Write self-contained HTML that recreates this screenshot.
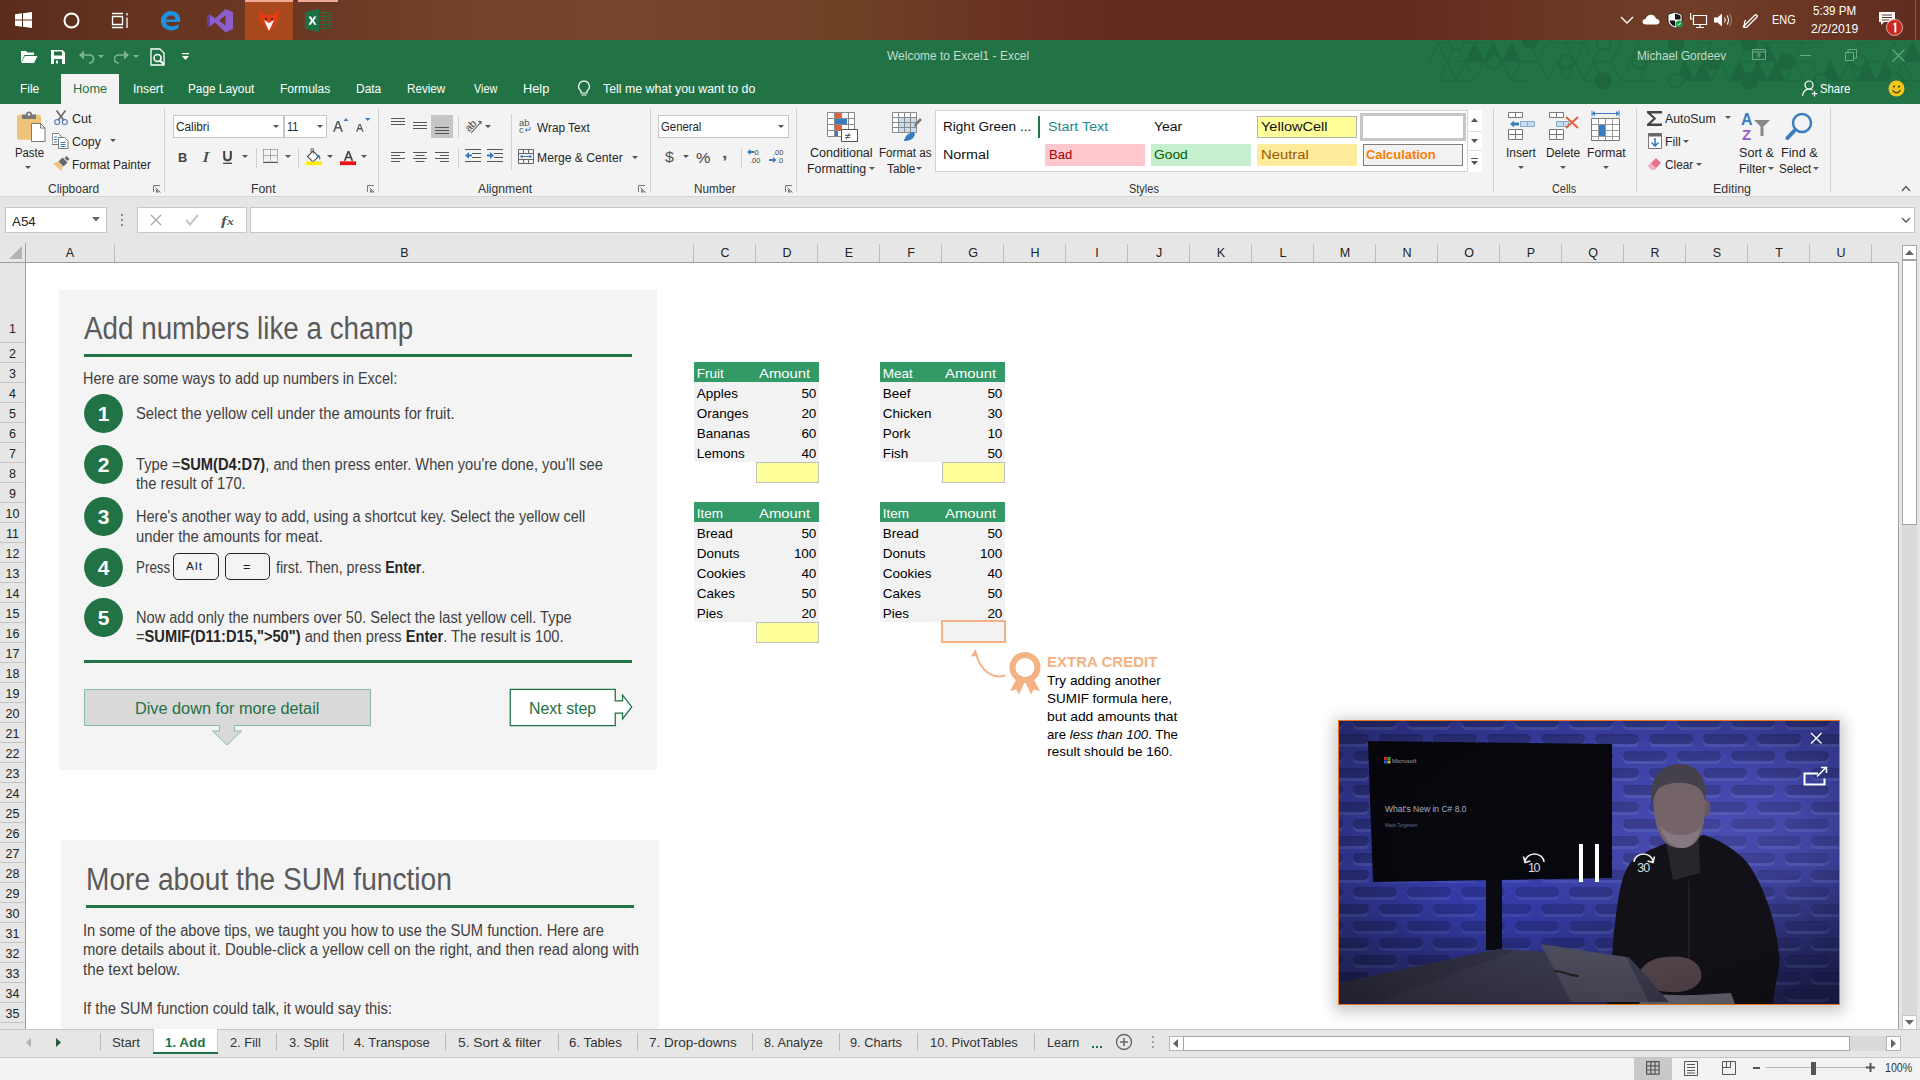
<!DOCTYPE html>
<html><head><meta charset="utf-8"><style>
*{margin:0;padding:0;box-sizing:border-box}
html,body{width:1920px;height:1080px;overflow:hidden;background:#fff;font-family:"Liberation Sans",sans-serif;position:relative}
.a{position:absolute}
.t{position:absolute;white-space:nowrap;line-height:1;transform-origin:0 50%}
</style></head><body>
<div class="a" style="left:0px;top:0px;width:1920px;height:40px;background:linear-gradient(90deg,#5a2c1e 0%,#663420 8%,#6c3a24 18%,#74452a 26%,#76452c 33%,#6e4024 45%,#6a3424 51%,#652a1e 58%,#652a1e 73%,#6c3826 82%,#703e28 88%,#6a3424 95%,#5e2c20 100%)"></div>
<svg class="a" style="left:15px;top:12px;" width="17" height="16" viewBox="0 0 17 16"><path fill="#fff" d="M0 2.3L7 1.3V7.6H0zM8 1.2L17 0V7.6H8zM0 8.4H7V14.7L0 13.7zM8 8.4H17V16L8 14.8z"/></svg>
<svg class="a" style="left:63px;top:12px;" width="17" height="17" viewBox="0 0 17 17"><circle cx="8.5" cy="8.5" r="7" fill="none" stroke="#fff" stroke-width="2"/></svg>
<svg class="a" style="left:111px;top:12px;" width="18" height="17" viewBox="0 0 18 17"><path fill="none" stroke="#fff" stroke-width="1.3" d="M1.5 4.5h10v8h-10zM1 1.5h11M1 15.5h11M16 1v2.5M16 5.5v10.5"/></svg>
<svg class="a" style="left:160px;top:10px;" width="22" height="21" viewBox="0 0 22 21"><path fill="#1e90e0" d="M11 1C5 1 1 5.5 1 11c0 6 5 9.5 10 9.5 3 0 5.5-1 7.5-2.5v-4c-2 1.5-4.5 2.3-7 2.3-3 0-5.5-1.8-5.5-4.3H20c.2-1 .2-1.5.2-2C20.2 4.5 16.5 1 11 1zM6 9.5C6.5 7 8.5 5.5 11 5.5s4.3 1.5 4.5 4z"/></svg>
<svg class="a" style="left:207px;top:8px;" width="26" height="25" viewBox="0 0 26 25"><path fill="#8b5ec9" d="M18.5 1L26 4v17l-7.5 3.5L8 14.5 3 18.5 0 17V8l3-1.5 5 4zM18.5 7.5L12 12.5l6.5 5z"/><path fill="#6b3fa9" d="M0 8l3-1.5v12L0 17z"/></svg>
<div class="a" style="left:245px;top:0px;width:48px;height:40px;background:#a84a1e"></div>
<div class="a" style="left:245px;top:0px;width:48px;height:2px;background:#f0a898"></div>
<svg class="a" style="left:258px;top:9px;" width="22" height="23" viewBox="0 0 22 23"><path fill="#e63a12" d="M1 1l6 5h8l6-5-1 10-9 12-9-12z"/><path fill="#fff" d="M6 11l5 3 5-3-5 11z"/><circle cx="8" cy="10" r="1" fill="#222"/><circle cx="14" cy="10" r="1" fill="#222"/></svg>
<div class="a" style="left:298px;top:0px;width:40px;height:2px;background:#f0a898"></div>
<svg class="a" style="left:305px;top:9px;" width="26" height="23" viewBox="0 0 26 23"><path fill="#1d7044" d="M0 3L14 0V23L0 20z"/><path fill="#fff" d="M3.5 7.5h2.5l1.5 2.8 1.5-2.8h2.4l-2.6 4 2.7 4.2H9.1L7.5 12.8 5.9 15.7H3.4l2.7-4.2z"/><path fill="none" stroke="#1d7044" stroke-width="1.2" d="M14 3.5h11v16H14M14 7.5h11M14 11.5h11M14 15.5h11M19 3.5v16"/></svg>
<svg class="a" style="left:1620px;top:16px;" width="14" height="9" viewBox="0 0 14 9"><path fill="none" stroke="#fff" stroke-width="1.3" d="M1 1l6 6 6-6"/></svg>
<svg class="a" style="left:1642px;top:14px;" width="18" height="11" viewBox="0 0 18 11"><path fill="#fff" d="M4 10.5C1.8 10.5 0.5 9.3 0.5 7.7 0.5 6 2 5 3.6 5.1 4.2 2.5 6.5 0.8 9 0.8c2.8 0 4.6 1.8 5 4 2 0 3.5 1.5 3.5 3 0 1.6-1.3 2.7-3 2.7z"/></svg>
<svg class="a" style="left:1667px;top:12px;" width="16" height="16" viewBox="0 0 16 16"><path fill="#fff" d="M8 0L15 2.5V8c0 4-3 6.8-7 8-4-1.2-7-4-7-8V2.5z"/><path fill="#111" d="M8 1.5L13.5 3.5V7.5H8zM2.5 8.5H8v6C5 13.3 3 11.5 2.5 8.5z"/><path fill="none" stroke="#111" stroke-width="0.8" d="M8 0L15 2.5V8c0 4-3 6.8-7 8-4-1.2-7-4-7-8V2.5z"/><circle cx="12" cy="12" r="3.6" fill="#1f9a48"/><path fill="none" stroke="#fff" stroke-width="1" d="M10.3 12l1.2 1.2 2.2-2.3"/></svg>
<svg class="a" style="left:1690px;top:12px;" width="18" height="16" viewBox="0 0 18 16"><path fill="none" stroke="#fff" stroke-width="1.2" d="M3.5 3.5h13v9h-13zM10 12.5v3M6 15.5h8M0.6 1v6h3"/></svg>
<svg class="a" style="left:1714px;top:13px;" width="18" height="14" viewBox="0 0 18 14"><path fill="#fff" d="M0 4.5h3.5L8 0.5v13L3.5 9.5H0z"/><path fill="none" stroke="#fff" stroke-width="1.1" d="M10.5 4.5c1 1.5 1 3.5 0 5M13 2.5c2 2.5 2 6.5 0 9"/><path fill="none" stroke="#a08070" stroke-width="1.1" d="M15.5 1c2.5 3.5 2.5 8.5 0 12"/></svg>
<svg class="a" style="left:1742px;top:12px;" width="18" height="16" viewBox="0 0 18 16"><path fill="none" stroke="#fff" stroke-width="1.3" d="M3 13l10-10c1-1 3 1 2 2L5 15l-3 1zM1 15c3-3 0-5 3-7"/></svg>
<div class="t" style="transform:scaleX(0.9110);left:1772.40px;top:14.46px;font-size:12px;color:#fff;">ENG</div>
<div class="t" style="transform:scaleX(0.9664);left:1813.40px;top:5.46px;font-size:12px;color:#fff;">5:39 PM</div>
<div class="t" style="transform:scaleX(1.0103);left:1811.40px;top:22.96px;font-size:12px;color:#fff;">2/2/2019</div>
<svg class="a" style="left:1878px;top:11px;" width="18" height="16" viewBox="0 0 18 16"><path fill="#fff" d="M1 1h16v10H6l-3 3v-3H1z"/><path stroke="#6a3424" stroke-width="1" d="M4 4h10M4 6.5h10M4 9h7"/></svg>
<svg class="a" style="left:1885px;top:18px;" width="19" height="19" viewBox="0 0 19 19"><circle cx="9.5" cy="9.5" r="8" fill="#c8281e" stroke="#f0d0c8" stroke-width="0.8"/><path fill="#fff" d="M8.5 5.5l2-1h0.8v10H9.4V6.8l-1 .5z"/></svg>
<div class="a" style="left:1915px;top:0px;width:1px;height:40px;background:#8a5a48"></div>
<div class="a" style="left:0px;top:40px;width:1920px;height:64px;background:#217346"></div>
<svg class="a" style="left:1280px;top:40px;opacity:1" width="640" height="56" viewBox="0 0 640 56"><path d="M158.2 2.7L167.4 21.7" stroke="#1d6a3f" stroke-width="1.2"/><path d="M158.2 2.7L149.1 21.7" stroke="#1d6a3f" stroke-width="1.2"/><path d="M176.5 2.7L185.6 21.7" stroke="#1d6a3f" stroke-width="1.2"/><path d="M176.5 2.7L167.4 21.7" stroke="#1d6a3f" stroke-width="1.2"/><path d="M194.8 2.7L203.9 21.7" stroke="#1d6a3f" stroke-width="1.2"/><path d="M194.8 2.7L185.6 21.7" stroke="#1d6a3f" stroke-width="1.2"/><path d="M194.8 2.7L203.9 21.7L185.6 21.7z" fill="#1e663f"/><path d="M213.0 2.7L222.1 21.7" stroke="#1d6a3f" stroke-width="1.2"/><path d="M213.0 2.7L203.9 21.7" stroke="#1d6a3f" stroke-width="1.2"/><path d="M213.0 2.7L222.1 21.7L203.9 21.7z" fill="#1e663f"/><path d="M231.2 2.7L240.4 21.7" stroke="#1d6a3f" stroke-width="1.2"/><path d="M231.2 2.7L240.4 21.7L222.1 21.7z" fill="#1e663f"/><path d="M249.5 2.7L258.6 21.7" stroke="#1d6a3f" stroke-width="1.2"/><path d="M267.8 2.7L258.6 21.7" stroke="#1d6a3f" stroke-width="1.2"/><path d="M286.0 2.7L295.1 21.7" stroke="#1d6a3f" stroke-width="1.2"/><path d="M304.2 2.7L313.4 21.7" stroke="#1d6a3f" stroke-width="1.2"/><path d="M304.2 2.7L295.1 21.7" stroke="#1d6a3f" stroke-width="1.2"/><path d="M322.5 2.7L313.4 21.7" stroke="#1d6a3f" stroke-width="1.2"/><path d="M340.8 2.7L331.6 21.7" stroke="#1d6a3f" stroke-width="1.2"/><path d="M359.0 2.7L368.1 21.7" stroke="#1d6a3f" stroke-width="1.2"/><path d="M359.0 2.7L349.9 21.7" stroke="#1d6a3f" stroke-width="1.2"/><path d="M377.2 2.7L368.1 21.7" stroke="#1d6a3f" stroke-width="1.2"/><path d="M395.5 2.7L386.4 21.7" stroke="#1d6a3f" stroke-width="1.2"/><path d="M432.0 2.7L422.9 21.7" stroke="#1d6a3f" stroke-width="1.2"/><path d="M450.2 2.7L441.1 21.7" stroke="#1d6a3f" stroke-width="1.2"/><path d="M468.5 2.7L477.6 21.7" stroke="#1d6a3f" stroke-width="1.2"/><path d="M468.5 2.7L459.4 21.7" stroke="#1d6a3f" stroke-width="1.2"/><path d="M486.8 2.7L495.9 21.7" stroke="#1d6a3f" stroke-width="1.2"/><path d="M486.8 2.7L477.6 21.7" stroke="#1d6a3f" stroke-width="1.2"/><path d="M486.8 2.7L495.9 21.7L477.6 21.7z" fill="#1e663f"/><path d="M523.2 2.7L514.1 21.7" stroke="#1d6a3f" stroke-width="1.2"/><path d="M578.0 2.7L568.9 21.7" stroke="#1d6a3f" stroke-width="1.2"/><path d="M614.5 2.7L623.6 21.7" stroke="#1d6a3f" stroke-width="1.2"/><path d="M614.5 2.7L605.4 21.7" stroke="#1d6a3f" stroke-width="1.2"/><path d="M632.8 2.7L641.9 21.7" stroke="#1d6a3f" stroke-width="1.2"/><path d="M632.8 2.7L623.6 21.7" stroke="#1d6a3f" stroke-width="1.2"/><path d="M632.8 2.7L641.9 21.7L623.6 21.7z" fill="#1e663f"/><path d="M167.4 21.7L176.5 40.7" stroke="#1d6a3f" stroke-width="1.2"/><path d="M167.4 21.7L158.2 40.7" stroke="#1d6a3f" stroke-width="1.2"/><path d="M185.6 21.7L194.8 40.7" stroke="#1d6a3f" stroke-width="1.2"/><path d="M185.6 21.7L176.5 40.7" stroke="#1d6a3f" stroke-width="1.2"/><path d="M203.9 21.7L194.8 40.7" stroke="#1d6a3f" stroke-width="1.2"/><path d="M222.1 21.7L231.2 40.7" stroke="#1d6a3f" stroke-width="1.2"/><path d="M240.4 21.7L231.2 40.7" stroke="#1d6a3f" stroke-width="1.2"/><path d="M258.6 21.7L267.8 40.7" stroke="#1d6a3f" stroke-width="1.2"/><path d="M276.9 21.7L286.0 40.7" stroke="#1d6a3f" stroke-width="1.2"/><path d="M276.9 21.7L267.8 40.7" stroke="#1d6a3f" stroke-width="1.2"/><path d="M295.1 21.7L304.2 40.7" stroke="#1d6a3f" stroke-width="1.2"/><path d="M295.1 21.7L286.0 40.7" stroke="#1d6a3f" stroke-width="1.2"/><path d="M313.4 21.7L322.5 40.7" stroke="#1d6a3f" stroke-width="1.2"/><path d="M313.4 21.7L304.2 40.7" stroke="#1d6a3f" stroke-width="1.2"/><path d="M331.6 21.7L340.8 40.7" stroke="#1d6a3f" stroke-width="1.2"/><path d="M349.9 21.7L340.8 40.7" stroke="#1d6a3f" stroke-width="1.2"/><path d="M368.1 21.7L359.0 40.7" stroke="#1d6a3f" stroke-width="1.2"/><path d="M404.6 21.7L413.8 40.7" stroke="#1d6a3f" stroke-width="1.2"/><path d="M404.6 21.7L395.5 40.7" stroke="#1d6a3f" stroke-width="1.2"/><path d="M404.6 21.7L413.8 40.7L395.5 40.7z" fill="#1e663f"/><path d="M422.9 21.7L413.8 40.7" stroke="#1d6a3f" stroke-width="1.2"/><path d="M422.9 21.7L432.0 40.7L413.8 40.7z" fill="#1e663f"/><path d="M441.1 21.7L450.2 40.7" stroke="#1d6a3f" stroke-width="1.2"/><path d="M441.1 21.7L432.0 40.7" stroke="#1d6a3f" stroke-width="1.2"/><path d="M459.4 21.7L468.5 40.7" stroke="#1d6a3f" stroke-width="1.2"/><path d="M459.4 21.7L450.2 40.7" stroke="#1d6a3f" stroke-width="1.2"/><path d="M459.4 21.7L468.5 40.7L450.2 40.7z" fill="#1e663f"/><path d="M477.6 21.7L486.8 40.7" stroke="#1d6a3f" stroke-width="1.2"/><path d="M477.6 21.7L468.5 40.7" stroke="#1d6a3f" stroke-width="1.2"/><path d="M477.6 21.7L486.8 40.7L468.5 40.7z" fill="#1e663f"/><path d="M495.9 21.7L505.0 40.7L486.8 40.7z" fill="#1e663f"/><path d="M514.1 21.7L523.2 40.7" stroke="#1d6a3f" stroke-width="1.2"/><path d="M514.1 21.7L505.0 40.7" stroke="#1d6a3f" stroke-width="1.2"/><path d="M532.4 21.7L541.5 40.7" stroke="#1d6a3f" stroke-width="1.2"/><path d="M550.6 21.7L559.8 40.7" stroke="#1d6a3f" stroke-width="1.2"/><path d="M550.6 21.7L541.5 40.7" stroke="#1d6a3f" stroke-width="1.2"/><path d="M550.6 21.7L559.8 40.7L541.5 40.7z" fill="#1e663f"/><path d="M568.9 21.7L578.0 40.7" stroke="#1d6a3f" stroke-width="1.2"/><path d="M568.9 21.7L559.8 40.7" stroke="#1d6a3f" stroke-width="1.2"/><path d="M587.1 21.7L578.0 40.7" stroke="#1d6a3f" stroke-width="1.2"/><path d="M587.1 21.7L596.2 40.7L578.0 40.7z" fill="#1e663f"/><path d="M605.4 21.7L596.2 40.7" stroke="#1d6a3f" stroke-width="1.2"/><path d="M605.4 21.7L614.5 40.7L596.2 40.7z" fill="#1e663f"/><path d="M623.6 21.7L632.8 40.7" stroke="#1d6a3f" stroke-width="1.2"/><path d="M623.6 21.7L614.5 40.7" stroke="#1d6a3f" stroke-width="1.2"/><path d="M158.2 2.7H176.5" stroke="#1d6a3f" stroke-width="1.2"/><path d="M176.5 2.7H194.8" stroke="#1d6a3f" stroke-width="1.2"/><path d="M194.8 2.7H213.0" stroke="#1d6a3f" stroke-width="1.2"/><path d="M267.8 2.7H286.0" stroke="#1d6a3f" stroke-width="1.2"/><path d="M286.0 2.7H304.2" stroke="#1d6a3f" stroke-width="1.2"/><path d="M413.8 2.7H432.0" stroke="#1d6a3f" stroke-width="1.2"/><path d="M450.2 2.7H468.5" stroke="#1d6a3f" stroke-width="1.2"/><path d="M468.5 2.7H486.8" stroke="#1d6a3f" stroke-width="1.2"/><path d="M486.8 2.7H505.0" stroke="#1d6a3f" stroke-width="1.2"/><path d="M505.0 2.7H523.2" stroke="#1d6a3f" stroke-width="1.2"/><path d="M523.2 2.7H541.5" stroke="#1d6a3f" stroke-width="1.2"/><path d="M578.0 2.7H596.2" stroke="#1d6a3f" stroke-width="1.2"/><path d="M167.4 21.7H185.6" stroke="#1d6a3f" stroke-width="1.2"/><path d="M185.6 21.7H203.9" stroke="#1d6a3f" stroke-width="1.2"/><path d="M203.9 21.7H222.1" stroke="#1d6a3f" stroke-width="1.2"/><path d="M222.1 21.7H240.4" stroke="#1d6a3f" stroke-width="1.2"/><path d="M240.4 21.7H258.6" stroke="#1d6a3f" stroke-width="1.2"/><path d="M313.4 21.7H331.6" stroke="#1d6a3f" stroke-width="1.2"/><path d="M368.1 21.7H386.4" stroke="#1d6a3f" stroke-width="1.2"/><path d="M459.4 21.7H477.6" stroke="#1d6a3f" stroke-width="1.2"/><path d="M477.6 21.7H495.9" stroke="#1d6a3f" stroke-width="1.2"/><path d="M514.1 21.7H532.4" stroke="#1d6a3f" stroke-width="1.2"/><path d="M568.9 21.7H587.1" stroke="#1d6a3f" stroke-width="1.2"/><path d="M587.1 21.7H605.4" stroke="#1d6a3f" stroke-width="1.2"/><path d="M641.9 21.7H660.1" stroke="#1d6a3f" stroke-width="1.2"/><path d="M158.2 40.7H176.5" stroke="#1d6a3f" stroke-width="1.2"/><path d="M176.5 40.7H194.8" stroke="#1d6a3f" stroke-width="1.2"/><path d="M231.2 40.7H249.5" stroke="#1d6a3f" stroke-width="1.2"/><path d="M304.2 40.7H322.5" stroke="#1d6a3f" stroke-width="1.2"/><path d="M340.8 40.7H359.0" stroke="#1d6a3f" stroke-width="1.2"/><path d="M359.0 40.7H377.2" stroke="#1d6a3f" stroke-width="1.2"/><path d="M450.2 40.7H468.5" stroke="#1d6a3f" stroke-width="1.2"/><path d="M505.0 40.7H523.2" stroke="#1d6a3f" stroke-width="1.2"/><path d="M523.2 40.7H541.5" stroke="#1d6a3f" stroke-width="1.2"/><path d="M541.5 40.7H559.8" stroke="#1d6a3f" stroke-width="1.2"/><path d="M559.8 40.7H578.0" stroke="#1d6a3f" stroke-width="1.2"/><path d="M596.2 40.7H614.5" stroke="#1d6a3f" stroke-width="1.2"/><path d="M614.5 40.7H632.8" stroke="#1d6a3f" stroke-width="1.2"/><path d="M632.8 40.7H651.0" stroke="#1d6a3f" stroke-width="1.2"/><circle cx="176.5999999999999" cy="2.700000000000003" r="7" fill="#217346" stroke="#1d6a3f" stroke-width="2.2"/><circle cx="250.4000000000001" cy="0" r="8.5" fill="#1d663e"/><circle cx="323.5999999999999" cy="2.700000000000003" r="7" fill="#217346" stroke="#1d6a3f" stroke-width="2.2"/><circle cx="213.79999999999995" cy="21.700000000000003" r="7" fill="#217346" stroke="#1d6a3f" stroke-width="2.2"/><circle cx="286.29999999999995" cy="21.700000000000003" r="7" fill="#217346" stroke="#1d6a3f" stroke-width="2.2"/><circle cx="359.5" cy="21.700000000000003" r="7" fill="#217346" stroke="#1d6a3f" stroke-width="2.2"/><circle cx="323" cy="40.7" r="8.5" fill="#1d663e"/><circle cx="396" cy="40.7" r="7" fill="#217346" stroke="#1d6a3f" stroke-width="2.2"/><circle cx="469.4000000000001" cy="40.7" r="8.5" fill="#1d663e"/><circle cx="541" cy="40.7" r="7" fill="#217346" stroke="#1d6a3f" stroke-width="2.2"/><circle cx="615.8" cy="40.7" r="7" fill="#217346" stroke="#1d6a3f" stroke-width="2.2"/><circle cx="432.79999999999995" cy="21.700000000000003" r="8.5" fill="#1d663e"/><circle cx="506" cy="21.700000000000003" r="8.5" fill="#1d663e"/><circle cx="579" cy="21.700000000000003" r="7" fill="#217346" stroke="#1d6a3f" stroke-width="2.2"/><circle cx="396" cy="2.700000000000003" r="8.5" fill="#1d663e"/><circle cx="469" cy="2.700000000000003" r="8.5" fill="#1d663e"/></svg>
<svg class="a" style="left:20px;top:49px;" width="18" height="15" viewBox="0 0 18 15"><path fill="#fff" d="M1 2h5l1.5 1.5H14V6H4.5L1 13.5zM4.8 7H17.5L14 14H1.3z"/></svg>
<svg class="a" style="left:51px;top:50px;" width="14" height="14" viewBox="0 0 14 14"><path fill="#fff" d="M0 0h11.5L14 2.5V14H0zM3 1.5v4h8v-4zM3 9v5h8V9zM5 10.5h2v3H5z"/></svg>
<svg class="a" style="left:79px;top:50px;" width="27" height="14" viewBox="0 0 27 14"><path fill="none" stroke="#7fb597" stroke-width="1.6" d="M2 5h8c3 0 4.5 2 4.5 4s-1.5 4-4.5 4"/><path fill="#7fb597" d="M0 5l5-4.5v9zM19 5h6l-3 3z"/></svg>
<svg class="a" style="left:114px;top:50px;" width="27" height="14" viewBox="0 0 27 14"><path fill="none" stroke="#7fb597" stroke-width="1.6" d="M13 5H5C2 5 .5 7 .5 9s1.5 4 4.5 4"/><path fill="#7fb597" d="M15 5L10 .5v9zM19 5h6l-3 3z"/></svg>
<svg class="a" style="left:150px;top:48px;" width="16" height="18" viewBox="0 0 16 18"><path fill="none" stroke="#fff" stroke-width="1.3" d="M1 1h9l4 4v12H1z"/><circle cx="7.5" cy="10" r="3.5" fill="none" stroke="#fff" stroke-width="1.6"/><path stroke="#fff" stroke-width="2" d="M10 12.5l4 4"/></svg>
<svg class="a" style="left:182px;top:53px;" width="7" height="8" viewBox="0 0 7 8"><path fill="#fff" d="M0 0h7v1.2H0zM0 3h7L3.5 7z"/></svg>
<div class="t" style="transform:scaleX(0.9979);left:887.40px;top:50.46px;font-size:12px;color:#c4dccd;">Welcome to Excel1  -  Excel</div>
<div class="t" style="transform:scaleX(0.9833);left:1636.90px;top:50.46px;font-size:12px;color:#c4dccd;">Michael Gordeev</div>
<svg class="a" style="left:1752px;top:49px;" width="15" height="12" viewBox="0 0 15 12"><path fill="none" stroke="#6fa887" stroke-width="1" d="M.5 .5h13v10H.5zM.5 3h13M7 9V4.5M5 6.5l2-2 2 2"/></svg>
<div class="a" style="left:1800px;top:55px;width:11px;height:1px;background:#6fa887"></div>
<svg class="a" style="left:1845px;top:49px;" width="12" height="12" viewBox="0 0 12 12"><path fill="none" stroke="#6fa887" stroke-width="1" d="M.5 3.5h8v8h-8zM3 3.5V.5h8.5v8.5H8.5"/></svg>
<svg class="a" style="left:1892px;top:49px;" width="13" height="13" viewBox="0 0 13 13"><path fill="none" stroke="#6fa887" stroke-width="1.1" d="M.5 .5l12 12M12.5 .5l-12 12"/></svg>
<div class="a" style="left:61px;top:74px;width:58px;height:30px;background:#f3f3f3"></div>
<div class="t" style="transform:scaleX(0.9550);left:19.68px;top:83.35px;font-size:12.5px;color:#fff;">File</div>
<div class="t" style="transform:scaleX(1.0272);left:72.78px;top:83.35px;font-size:12.5px;color:#217346;">Home</div>
<div class="t" style="transform:scaleX(0.9675);left:132.68px;top:83.35px;font-size:12.5px;color:#fff;">Insert</div>
<div class="t" style="transform:scaleX(0.9437);left:188.38px;top:83.35px;font-size:12.5px;color:#fff;">Page Layout</div>
<div class="t" style="transform:scaleX(0.9646);left:280.38px;top:83.35px;font-size:12.5px;color:#fff;">Formulas</div>
<div class="t" style="transform:scaleX(0.9562);left:356.38px;top:83.35px;font-size:12.5px;color:#fff;">Data</div>
<div class="t" style="transform:scaleX(0.9329);left:407.38px;top:83.35px;font-size:12.5px;color:#fff;">Review</div>
<div class="t" style="transform:scaleX(0.8651);left:474.38px;top:83.35px;font-size:12.5px;color:#fff;">View</div>
<div class="t" style="transform:scaleX(1.0207);left:523.38px;top:83.35px;font-size:12.5px;color:#fff;">Help</div>
<svg class="a" style="left:577px;top:80px;" width="14" height="17" viewBox="0 0 14 17"><path fill="none" stroke="#fff" stroke-width="1.2" d="M7 1.2a5.3 5.3 0 0 0-3 9.7V13h6v-2.1a5.3 5.3 0 0 0-3-9.7zM4.5 15h5"/></svg>
<div class="t" style="transform:scaleX(0.9870);left:603.38px;top:83.35px;font-size:12.5px;color:#fff;">Tell me what you want to do</div>
<svg class="a" style="left:1802px;top:80px;" width="16" height="17" viewBox="0 0 16 17"><circle cx="7" cy="5" r="4" fill="none" stroke="#fff" stroke-width="1.2"/><path fill="none" stroke="#fff" stroke-width="1.2" d="M.6 16c0-4 3-7 6.4-7 1.5 0 2.5.4 3.5 1M12.5 11v5.5M9.8 13.7h5.5"/></svg>
<div class="t" style="transform:scaleX(0.9068);left:1820.38px;top:83.35px;font-size:12.5px;color:#fff;">Share</div>
<svg class="a" style="left:1888px;top:80px;" width="17" height="17" viewBox="0 0 17 17"><circle cx="8.5" cy="8.5" r="8" fill="#f5c518"/><circle cx="6" cy="6.5" r="1.1" fill="#3a3a00"/><circle cx="11" cy="6.5" r="1.1" fill="#3a3a00"/><path fill="none" stroke="#3a3a00" stroke-width="1.1" d="M4.5 10c1 2 2.3 2.8 4 2.8s3-.8 4-2.8"/></svg>
<div class="a" style="left:0px;top:104px;width:1920px;height:92px;background:#f3f3f3"></div>
<div class="a" style="left:0px;top:196px;width:1920px;height:1px;background:#d6d6d6"></div>
<svg class="a" style="left:16px;top:111px;" width="30" height="32" viewBox="0 0 30 32"><rect x="1" y="3.8" width="24" height="25" rx="2" fill="#eec47c"/><path fill="#777" d="M6 3.5h14v4.5H6z"/><circle cx="13" cy="3.5" r="3" fill="#777"/><circle cx="13" cy="3.5" r="1.2" fill="#f3f3f3"/><path fill="#fff" stroke="#7a7a7a" stroke-width="1" d="M15.5 12.5h9l4.5 4.5v13.5H15.5z"/><path fill="none" stroke="#7a7a7a" d="M24.5 12.5v4.5h4.5"/></svg>
<div class="t" style="transform:scaleX(0.9450);left:14.80px;top:147.16px;font-size:12px;color:#262626;">Paste</div>
<svg class="a" style="left:25px;top:166px;" width="6" height="4" viewBox="0 0 6 4"><path fill="#555" d="M0 0h6L3 3z"/></svg>
<svg class="a" style="left:53px;top:110px;" width="16" height="16" viewBox="0 0 16 16"><path stroke="#666" stroke-width="1.6" d="M3.5 0.5l7.5 10M12.5 0.5L5 10.5"/><circle cx="4.2" cy="12" r="2.5" fill="none" stroke="#4a7cc2" stroke-width="1.1"/><circle cx="11.8" cy="12" r="2.5" fill="none" stroke="#4a7cc2" stroke-width="1.1"/></svg>
<div class="t" style="transform:scaleX(1.0488);left:71.70px;top:112.96px;font-size:12px;color:#262626;">Cut</div>
<svg class="a" style="left:52px;top:133px;" width="17" height="16" viewBox="0 0 17 16"><path fill="#fff" stroke="#777" d="M.5 .5h6l2.5 2.5v8.5h-9z"/><path fill="#fff" stroke="#777" d="M6.5 4.5h6l3.5 3.5v7.5h-9.5z"/><path stroke="#3a7cc0" d="M2 4h3M2 6.5h3M2 9h3M8.5 9.5h5M8.5 11.5h5M8.5 13.5h5"/></svg>
<div class="t" style="transform:scaleX(1.0316);left:71.70px;top:136.36px;font-size:12px;color:#262626;">Copy</div>
<svg class="a" style="left:109.5px;top:139px;" width="6" height="4" viewBox="0 0 6 4"><path fill="#555" d="M0 0h6L3 3z"/></svg>
<svg class="a" style="left:53px;top:156px;" width="17" height="15" viewBox="0 0 17 15"><path fill="#eec47c" d="M0 7.5l5-2 5 5-2 4.5z"/><path fill="#666" d="M5.5 5.5l4-4 5 5-4 4z"/><path fill="#666" d="M11.5 2l2-2 3 3-2 2z"/></svg>
<div class="t" style="transform:scaleX(0.9942);left:71.70px;top:158.96px;font-size:12px;color:#262626;">Format Painter</div>
<div class="t" style="transform:scaleX(0.9966);left:47.90px;top:182.96px;font-size:12px;color:#333;">Clipboard</div>
<svg class="a" style="left:153px;top:185px;" width="8" height="8" viewBox="0 0 8 8"><path fill="none" stroke="#777" stroke-width="1" d="M.5 7V.5H7"/><path fill="#777" d="M3 4l3.5 3.5H3zM3.5 3L7.5 7"/><path stroke="#777" d="M2.5 2.5l5 5"/></svg>
<div class="a" style="left:164px;top:108px;width:1px;height:84px;background:#d2d2d2"></div>
<div class="a" style="left:173px;top:115px;width:111px;height:23px;background:#fff;border:1px solid #c6c6c6"></div>
<div class="t" style="transform:scaleX(0.9819);left:176.20px;top:121.46px;font-size:12px;color:#262626;">Calibri</div>
<svg class="a" style="left:273px;top:124.5px;" width="6" height="4" viewBox="0 0 6 4"><path fill="#555" d="M0 0h6L3 3z"/></svg>
<div class="a" style="left:284px;top:115px;width:43px;height:23px;background:#fff;border:1px solid #c6c6c6"></div>
<div class="t" style="transform:scaleX(0.8982);left:286.90px;top:121.46px;font-size:12px;color:#262626;">11</div>
<svg class="a" style="left:317px;top:124.5px;" width="6" height="4" viewBox="0 0 6 4"><path fill="#555" d="M0 0h6L3 3z"/></svg>
<svg class="a" style="left:333px;top:118px;" width="15" height="14" viewBox="0 0 15 14"><path fill="#555" d="M0 13.7L4 3h2l4 10.7H8.2L7.1 10.6H2.9L1.8 13.7zM3.4 9.1h3.2L5 4.6z"/><path fill="#3a7cc0" d="M10.5 3l2.5-3L15.5 3z"/></svg>
<svg class="a" style="left:355px;top:118px;" width="15" height="14" viewBox="0 0 15 14"><path fill="#555" d="M1 13.7L4 6h1.6L8.6 13.7H7.2L6.4 11.4H3.2L2.4 13.7zM3.7 10.1h2.2L4.8 7z"/><path fill="#3a7cc0" d="M10 0h5.5l-2.75 3z"/></svg>
<div class="t" style="transform:scaleX(1.0242);left:178.38px;top:151.55px;font-size:12.5px;color:#444;font-weight:bold;">B</div>
<div class="t" style="transform:scaleX(1.5839);left:201.80px;top:150.92px;font-size:14px;color:#444;font-family:'Liberation Serif';font-style:italic">I</div>
<svg class="a" style="left:222px;top:151px;" width="11" height="13" viewBox="0 0 11 13"><path fill="none" stroke="#444" stroke-width="2.1" d="M2.2 0v5.8c0 2.3 1.2 3.6 3.3 3.6s3.3-1.3 3.3-3.6V0"/><path stroke="#444" stroke-width="1.3" d="M1 12.3h9"/></svg>
<svg class="a" style="left:241.5px;top:155px;" width="6" height="4" viewBox="0 0 6 4"><path fill="#555" d="M0 0h6L3 3z"/></svg>
<div class="a" style="left:256px;top:148px;width:1px;height:20px;background:#d2d2d2"></div>
<svg class="a" style="left:263px;top:149px;" width="15" height="15" viewBox="0 0 15 15"><path fill="none" stroke="#666" stroke-width="1" stroke-dasharray="1 1" d="M.5 .5h14M.5 .5v12M14.5 .5v12M7.5 .5v12M.5 6.5h14"/><path stroke="#555" stroke-width="1.2" d="M0 13.4h15"/></svg>
<svg class="a" style="left:284.5px;top:155px;" width="6" height="4" viewBox="0 0 6 4"><path fill="#555" d="M0 0h6L3 3z"/></svg>
<div class="a" style="left:298px;top:148px;width:1px;height:20px;background:#d2d2d2"></div>
<svg class="a" style="left:305px;top:148px;" width="18" height="18" viewBox="0 0 18 18"><path fill="#fff" stroke="#555" stroke-width="1.1" d="M2.5 8.5l5.5-5.5 5.5 5.5-5.5 5.5z"/><path fill="none" stroke="#555" stroke-width="1" d="M6 4.5V1.5a1.2 1.2 0 0 1 2.4 0v4"/><path fill="#3a7cc0" d="M13.5 6.5c2 1.5 2.5 3.5 1.3 5.5-.5-1.5-1-2.5-2.5-3.5z"/><path fill="#ffee00" d="M1 13.5h16v3.6H1z"/></svg>
<svg class="a" style="left:327px;top:155px;" width="6" height="4" viewBox="0 0 6 4"><path fill="#555" d="M0 0h6L3 3z"/></svg>
<svg class="a" style="left:340px;top:150px;" width="17" height="16" viewBox="0 0 17 16"><path fill="#444" d="M3.8 10.8L7.6 1h1.8l3.8 9.8h-1.9l-.9-2.5H6.6l-.9 2.5zM7.2 6.8h2.6L8.5 3z"/><path fill="#ee1111" d="M0 11.3h16v3.8H0z"/></svg>
<svg class="a" style="left:361px;top:155px;" width="6" height="4" viewBox="0 0 6 4"><path fill="#555" d="M0 0h6L3 3z"/></svg>
<div class="t" style="transform:scaleX(1.0243);left:250.90px;top:182.96px;font-size:12px;color:#333;">Font</div>
<svg class="a" style="left:367px;top:185px;" width="8" height="8" viewBox="0 0 8 8"><path fill="none" stroke="#777" stroke-width="1" d="M.5 7V.5H7"/><path fill="#777" d="M3 4l3.5 3.5H3zM3.5 3L7.5 7"/><path stroke="#777" d="M2.5 2.5l5 5"/></svg>
<div class="a" style="left:378px;top:108px;width:1px;height:84px;background:#d2d2d2"></div>
<svg class="a" style="left:391px;top:118px;" width="15" height="8" viewBox="0 0 15 8"><path stroke="#555" stroke-width="1" d="M0 .5h14M0 3.5h14M0 6.5h14"/></svg>
<svg class="a" style="left:413px;top:122px;" width="15" height="8" viewBox="0 0 15 8"><path stroke="#555" stroke-width="1" d="M0 .5h14M0 3.5h14M0 6.5h14"/></svg>
<div class="a" style="left:431px;top:115px;width:22px;height:23px;background:#c5c5c5"></div>
<svg class="a" style="left:435px;top:127px;" width="15" height="8" viewBox="0 0 15 8"><path stroke="#555" stroke-width="1" d="M0 .5h14M0 3.5h14M0 6.5h14"/></svg>
<div class="a" style="left:457.6px;top:116px;width:1px;height:22px;background:#d2d2d2"></div>
<svg class="a" style="left:465px;top:118px;" width="17" height="16" viewBox="0 0 17 16"><text x="0" y="11" font-size="10.5" fill="#444" font-family="Liberation Sans" transform="rotate(-45 6 8)">ab</text><path stroke="#555" stroke-width="1.1" d="M6 15L16 4"/><path fill="#555" d="M13 3h3.5v3.5z"/></svg>
<svg class="a" style="left:485px;top:124.5px;" width="6" height="4" viewBox="0 0 6 4"><path fill="#555" d="M0 0h6L3 3z"/></svg>
<svg class="a" style="left:391px;top:152px;" width="15" height="10" viewBox="0 0 15 10"><path stroke="#555" d="M0 .5h14M0 3.5h9M0 6.5h14M0 9.5h9"/></svg>
<svg class="a" style="left:413px;top:152px;" width="15" height="10" viewBox="0 0 15 10"><path stroke="#555" d="M0 .5h14M2.5 3.5h9M0 6.5h14M2.5 9.5h9"/></svg>
<svg class="a" style="left:435px;top:152px;" width="15" height="10" viewBox="0 0 15 10"><path stroke="#555" d="M0 .5h14M5 3.5h9M0 6.5h14M5 9.5h9"/></svg>
<div class="a" style="left:457.6px;top:148px;width:1px;height:20px;background:#d2d2d2"></div>
<svg class="a" style="left:465px;top:149px;" width="17" height="14" viewBox="0 0 17 14"><path stroke="#555" d="M0 .5h16M7 4.5h9M7 8.5h9M0 12.5h16"/><path fill="#3a7cc0" d="M0 6.5l4-3.5v2.5h3v2H4v2.5z"/></svg>
<svg class="a" style="left:487px;top:149px;" width="17" height="14" viewBox="0 0 17 14"><path stroke="#555" d="M0 .5h16M7 4.5h9M7 8.5h9M0 12.5h16"/><path fill="#3a7cc0" d="M7 6.5l-4-3.5v2.5H0v2h3v2.5z"/></svg>
<div class="a" style="left:510.7px;top:114px;width:1px;height:56px;background:#d2d2d2"></div>
<svg class="a" style="left:519px;top:118px;" width="14" height="15" viewBox="0 0 14 15"><text x="0" y="7.5" font-size="9.5" fill="#555" font-family="Liberation Sans">ab</text><text x="0" y="14.5" font-size="9.5" fill="#555" font-family="Liberation Sans">c</text><path fill="none" stroke="#3a7cc0" stroke-width="1" d="M11 9v3H7"/><path fill="#3a7cc0" d="M8 10l-2 2 2 2z"/></svg>
<div class="t" style="transform:scaleX(0.9855);left:536.80px;top:121.66px;font-size:12px;color:#262626;">Wrap Text</div>
<svg class="a" style="left:518px;top:149px;" width="16" height="16" viewBox="0 0 16 16"><path fill="none" stroke="#666" d="M.5 .5h15v14H.5zM.5 4.5h15M.5 10.5h15M5.5 .5v4M10.5 .5v4M5.5 10.5v4M10.5 10.5v4"/><path stroke="#3a7cc0" d="M3 7.5h10"/><path fill="#3a7cc0" d="M2 7.5l2.5-2v4zM14 7.5l-2.5-2v4z"/></svg>
<div class="t" style="transform:scaleX(1.0129);left:536.80px;top:152.46px;font-size:12px;color:#262626;">Merge &amp; Center</div>
<svg class="a" style="left:631.5px;top:155.5px;" width="6" height="4" viewBox="0 0 6 4"><path fill="#555" d="M0 0h6L3 3z"/></svg>
<div class="t" style="transform:scaleX(1.0155);left:478.40px;top:182.96px;font-size:12px;color:#333;">Alignment</div>
<svg class="a" style="left:638px;top:185px;" width="8" height="8" viewBox="0 0 8 8"><path fill="none" stroke="#777" stroke-width="1" d="M.5 7V.5H7"/><path fill="#777" d="M3 4l3.5 3.5H3zM3.5 3L7.5 7"/><path stroke="#777" d="M2.5 2.5l5 5"/></svg>
<div class="a" style="left:649.7px;top:108px;width:1px;height:84px;background:#d2d2d2"></div>
<div class="a" style="left:658px;top:115px;width:131px;height:23px;background:#fff;border:1px solid #c6c6c6"></div>
<div class="t" style="transform:scaleX(0.9461);left:661.00px;top:121.46px;font-size:12px;color:#262626;">General</div>
<svg class="a" style="left:778px;top:124.5px;" width="6" height="4" viewBox="0 0 6 4"><path fill="#555" d="M0 0h6L3 3z"/></svg>
<div class="t" style="transform:scaleX(1.1415);left:664.50px;top:150.12px;font-size:14px;color:#555;">$</div>
<svg class="a" style="left:683px;top:155px;" width="6" height="4" viewBox="0 0 6 4"><path fill="#555" d="M0 0h6L3 3z"/></svg>
<div class="t" style="transform:scaleX(1.1563);left:696.10px;top:151.12px;font-size:14px;color:#444;">%</div>
<div class="t" style="transform:scaleX(1.3880);left:721.90px;top:145.62px;font-size:14px;color:#555;font-weight:bold;">,</div>
<div class="a" style="left:740.8px;top:148px;width:1px;height:20px;background:#d2d2d2"></div>
<svg class="a" style="left:747px;top:148px;" width="16" height="16" viewBox="0 0 16 16"><path fill="#3a7cc0" d="M0 4l3.5-3v2h4v2h-4v2z"/><text x="7.5" y="7" font-size="7.5" fill="#444" font-family="Liberation Sans">0</text><text x="3" y="15" font-size="7.5" fill="#444" font-family="Liberation Sans">.00</text></svg>
<svg class="a" style="left:769px;top:148px;" width="16" height="16" viewBox="0 0 16 16"><text x="4" y="7" font-size="7.5" fill="#444" font-family="Liberation Sans">.00</text><path fill="#3a7cc0" d="M7.5 12l-3.5-3v2h-4v2h4v2z"/><text x="8" y="15" font-size="7.5" fill="#444" font-family="Liberation Sans">.0</text></svg>
<div class="t" style="transform:scaleX(0.9769);left:693.90px;top:182.96px;font-size:12px;color:#333;">Number</div>
<svg class="a" style="left:785px;top:185px;" width="8" height="8" viewBox="0 0 8 8"><path fill="none" stroke="#777" stroke-width="1" d="M.5 7V.5H7"/><path fill="#777" d="M3 4l3.5 3.5H3zM3.5 3L7.5 7"/><path stroke="#777" d="M2.5 2.5l5 5"/></svg>
<div class="a" style="left:796px;top:108px;width:1px;height:84px;background:#d2d2d2"></div>
<svg class="a" style="left:827px;top:112px;" width="31" height="30" viewBox="0 0 31 30"><path fill="#fff" stroke="#8a8a8a" stroke-width="1" d="M.5 .5h27v24H.5z"/><path stroke="#8a8a8a" d="M.5 6.5h27M.5 12.5h27M.5 18.5h27M7.5 .5v24M14.5 .5v24M21.5 .5v24"/><path fill="#e0613a" d="M8 1h6v5H8zM8 13h6v5H8z"/><path fill="#3a7cc0" d="M8 7h12v5H8zM8 19h3v5H8z"/><path fill="#fff" stroke="#555" d="M14.5 17.5h16v12h-16z"/><text x="17.5" y="28" font-size="11" fill="#444" font-family="Liberation Sans">≠</text></svg>
<div class="t" style="transform:scaleX(1.0425);left:809.90px;top:147.26px;font-size:12px;color:#262626;">Conditional</div>
<div class="t" style="transform:scaleX(1.0321);left:806.90px;top:163.16px;font-size:12px;color:#262626;">Formatting</div>
<svg class="a" style="left:868.5px;top:167px;" width="6" height="4" viewBox="0 0 6 4"><path fill="#555" d="M0 0h6L3 3z"/></svg>
<svg class="a" style="left:892px;top:112px;" width="30" height="30" viewBox="0 0 30 30"><path fill="#fff" stroke="#8a8a8a" d="M.5 .5h24v20H.5z"/><path fill="#c8dcf0" d="M6 5h18v15H6z"/><path stroke="#8a8a8a" d="M.5 5.5h24M.5 10.5h24M.5 15.5h24M6.5 .5v20M12.5 .5v20M18.5 .5v20"/><path fill="#777" d="M22 13l6-7 2 2-7 7z"/><path fill="#3a7cc0" d="M12 29c1-5 4-8 9-9l2 2c-1 5-5 7-11 7z"/></svg>
<div class="t" style="transform:scaleX(0.9719);left:878.80px;top:147.26px;font-size:12px;color:#262626;">Format as</div>
<div class="t" style="transform:scaleX(0.9935);left:887.10px;top:163.16px;font-size:12px;color:#262626;">Table</div>
<svg class="a" style="left:916px;top:167px;" width="6" height="4" viewBox="0 0 6 4"><path fill="#555" d="M0 0h6L3 3z"/></svg>
<div class="a" style="left:935px;top:110px;width:547px;height:62px;background:#fff;border:1px solid #d4d4d4"></div>
<div class="t" style="transform:scaleX(1.0855);left:942.58px;top:121.05px;font-size:12.5px;color:#111;">Right Green ...</div>
<div class="a" style="left:1038px;top:116px;width:2px;height:22px;background:#217346"></div>
<div class="t" style="transform:scaleX(1.1459);left:1048.38px;top:121.05px;font-size:12.5px;color:#1d8a8a;">Start Text</div>
<div class="t" style="transform:scaleX(1.1181);left:1154.38px;top:121.05px;font-size:12.5px;color:#111;">Year</div>
<div class="a" style="left:1257px;top:116px;width:100px;height:22px;background:#ffff99;border:1px solid #b2b2b2"></div>
<div class="t" style="transform:scaleX(1.1631);left:1260.58px;top:121.05px;font-size:12.5px;color:#111;">YellowCell</div>
<div class="a" style="left:1360px;top:113px;width:106px;height:28px;background:#fff;border:3px solid #c6c6c6"></div>
<div class="t" style="transform:scaleX(1.1477);left:942.58px;top:148.75px;font-size:12.5px;color:#111;">Normal</div>
<div class="a" style="left:1045px;top:144px;width:100px;height:22px;background:#ffc7ce"></div>
<div class="t" style="transform:scaleX(1.0449);left:1048.88px;top:148.75px;font-size:12.5px;color:#9c0006;">Bad</div>
<div class="a" style="left:1151px;top:144px;width:100px;height:22px;background:#c6efce"></div>
<div class="t" style="transform:scaleX(1.1032);left:1154.38px;top:148.75px;font-size:12.5px;color:#006100;">Good</div>
<div class="a" style="left:1257px;top:144px;width:100px;height:22px;background:#ffeb9c"></div>
<div class="t" style="transform:scaleX(1.1850);left:1260.58px;top:148.75px;font-size:12.5px;color:#9c5700;">Neutral</div>
<div class="a" style="left:1363px;top:144px;width:100px;height:22px;background:#f2f2f2;border:1px solid #7f7f7f"></div>
<div class="t" style="transform:scaleX(1.0338);left:1366.38px;top:148.75px;font-size:12.5px;color:#fa7d00;font-weight:bold;">Calculation</div>
<div class="a" style="left:1467px;top:110px;width:15px;height:62px;background:#fff;border-left:1px solid #d4d4d4"></div>
<div class="a" style="left:1467px;top:131px;width:15px;height:1px;background:#e0e0e0"></div>
<div class="a" style="left:1467px;top:150px;width:15px;height:1px;background:#e0e0e0"></div>
<svg class="a" style="left:1471px;top:118px;" width="7" height="5" viewBox="0 0 7 5"><path fill="#555" d="M0 4L3.5 0 7 4z"/></svg>
<svg class="a" style="left:1471px;top:139px;" width="7" height="5" viewBox="0 0 7 5"><path fill="#555" d="M0 0h7L3.5 4z"/></svg>
<svg class="a" style="left:1471px;top:158px;" width="7" height="8" viewBox="0 0 7 8"><path fill="#555" d="M0 0h7v1H0zM0 3h7L3.5 7z"/></svg>
<div class="t" style="transform:scaleX(0.9147);left:1129.40px;top:182.96px;font-size:12px;color:#333;">Styles</div>
<div class="a" style="left:1492.5px;top:108px;width:1px;height:84px;background:#d2d2d2"></div>
<svg class="a" style="left:1508px;top:112px;" width="28" height="28" viewBox="0 0 28 28"><path fill="#fff" stroke="#777" d="M.5 .5h7v5h-7zM7.5 .5h7v5h-7zM.5 17.5h7v5h-7zM7.5 17.5h7v5h-7zM.5 22.5h7v5h-7zM7.5 22.5h7v5h-7z"/><path fill="#c8dcf0" stroke="#8aa8c8" d="M12.5 9.5h7v5h-7zM19.5 9.5h7v5h-7z"/><path fill="#3a7cc0" d="M2 12l4-3.5v2h5v3H6v2z"/></svg>
<div class="t" style="transform:scaleX(0.9961);left:1506.40px;top:147.26px;font-size:12px;color:#262626;">Insert</div>
<svg class="a" style="left:1518px;top:166px;" width="6" height="4" viewBox="0 0 6 4"><path fill="#555" d="M0 0h6L3 3z"/></svg>
<svg class="a" style="left:1549px;top:112px;" width="31" height="28" viewBox="0 0 31 28"><path fill="#fff" stroke="#777" d="M.5 .5h7v5h-7zM7.5 .5h7v5h-7zM.5 17.5h7v5h-7zM7.5 17.5h7v5h-7zM.5 22.5h7v5h-7zM7.5 22.5h7v5h-7z"/><path fill="#c8dcf0" stroke="#8aa8c8" d="M7.5 9.5h7v5h-7zM14.5 9.5h5v5h-5z"/><path stroke="#e0613a" stroke-width="2" d="M17 5l12 11M29 5L17 16"/></svg>
<div class="t" style="transform:scaleX(0.9859);left:1546.40px;top:147.26px;font-size:12px;color:#262626;">Delete</div>
<svg class="a" style="left:1560px;top:166px;" width="6" height="4" viewBox="0 0 6 4"><path fill="#555" d="M0 0h6L3 3z"/></svg>
<svg class="a" style="left:1590px;top:110px;" width="31" height="32" viewBox="0 0 31 32"><path stroke="#3a7cc0" d="M2 3.5h27M2 .5v6M29 .5v6"/><path fill="#3a7cc0" d="M2 3.5l3-2.5v5zM29 3.5l-3-2.5v5z"/><path fill="#fff" stroke="#777" d="M1.5 8.5h28v22h-28z"/><path stroke="#999" d="M1.5 14.5h28M1.5 20.5h28M1.5 26.5h28M8.5 8.5v22M15.5 8.5v22M22.5 8.5v22"/><path fill="#3a7cc0" d="M9 15h6v11H9z"/></svg>
<div class="t" style="transform:scaleX(1.0180);left:1586.90px;top:147.26px;font-size:12px;color:#262626;">Format</div>
<svg class="a" style="left:1603px;top:166px;" width="6" height="4" viewBox="0 0 6 4"><path fill="#555" d="M0 0h6L3 3z"/></svg>
<div class="t" style="transform:scaleX(0.9073);left:1551.90px;top:182.96px;font-size:12px;color:#333;">Cells</div>
<div class="a" style="left:1635.5px;top:108px;width:1px;height:84px;background:#d2d2d2"></div>
<svg class="a" style="left:1647px;top:111px;" width="16" height="15" viewBox="0 0 16 15"><path fill="#444" d="M0 0h15v2.5H3.8l5.5 5-5.5 5H15V15H0v-2l6.3-5.5L0 2z"/></svg>
<div class="t" style="transform:scaleX(1.0272);left:1665.40px;top:112.96px;font-size:12px;color:#262626;">AutoSum</div>
<svg class="a" style="left:1725px;top:116px;" width="6" height="4" viewBox="0 0 6 4"><path fill="#555" d="M0 0h6L3 3z"/></svg>
<svg class="a" style="left:1648px;top:133px;" width="15" height="16" viewBox="0 0 15 16"><path fill="#fff" stroke="#777" d="M.5 .5h13v15h-13z"/><path fill="#666" d="M.5 .5h13v3h-13z"/><path fill="none" stroke="#3a7cc0" stroke-width="1.6" d="M7 5v8M3.5 9.5L7 13l3.5-3.5"/></svg>
<div class="t" style="transform:scaleX(1.0243);left:1665.40px;top:136.26px;font-size:12px;color:#262626;">Fill</div>
<svg class="a" style="left:1683px;top:140px;" width="6" height="4" viewBox="0 0 6 4"><path fill="#555" d="M0 0h6L3 3z"/></svg>
<svg class="a" style="left:1648px;top:156px;" width="14" height="14" viewBox="0 0 14 14"><path fill="#e8708a" d="M0 10l8-8 5 5-8 8z"/><path fill="#f4b0c0" d="M0 10l3-3 5 5-3 3z"/></svg>
<div class="t" style="transform:scaleX(0.9830);left:1665.40px;top:159.26px;font-size:12px;color:#262626;">Clear</div>
<svg class="a" style="left:1695.5px;top:163px;" width="6" height="4" viewBox="0 0 6 4"><path fill="#555" d="M0 0h6L3 3z"/></svg>
<svg class="a" style="left:1741px;top:112px;" width="31" height="28" viewBox="0 0 31 28"><text x="0" y="13" font-size="16" font-weight="bold" fill="#3a7cc0" font-family="Liberation Sans">A</text><text x="1" y="27.5" font-size="15" font-weight="bold" fill="#9b59c6" font-family="Liberation Sans">Z</text><path fill="#888" d="M13 8h16l-6.5 6.5v9.5h-3v-9.5z"/></svg>
<div class="t" style="transform:scaleX(1.0477);left:1739.40px;top:147.26px;font-size:12px;color:#262626;">Sort &amp;</div>
<div class="t" style="transform:scaleX(1.0198);left:1739.40px;top:163.16px;font-size:12px;color:#262626;">Filter</div>
<svg class="a" style="left:1768px;top:167px;" width="6" height="4" viewBox="0 0 6 4"><path fill="#555" d="M0 0h6L3 3z"/></svg>
<svg class="a" style="left:1785px;top:112px;" width="29" height="28" viewBox="0 0 29 28"><circle cx="17" cy="11" r="9" fill="none" stroke="#3a7cc0" stroke-width="2.5"/><path stroke="#3a7cc0" stroke-width="4" stroke-linecap="round" d="M10 18l-7.5 8"/></svg>
<div class="t" style="transform:scaleX(1.0580);left:1781.40px;top:147.26px;font-size:12px;color:#262626;">Find &amp;</div>
<div class="t" style="transform:scaleX(0.9652);left:1779.40px;top:163.16px;font-size:12px;color:#262626;">Select</div>
<svg class="a" style="left:1813px;top:167px;" width="6" height="4" viewBox="0 0 6 4"><path fill="#555" d="M0 0h6L3 3z"/></svg>
<div class="t" style="transform:scaleX(1.0340);left:1713.40px;top:182.96px;font-size:12px;color:#333;">Editing</div>
<div class="a" style="left:1829.5px;top:108px;width:1px;height:84px;background:#d2d2d2"></div>
<svg class="a" style="left:1901px;top:185px;" width="10" height="7" viewBox="0 0 10 7"><path fill="none" stroke="#555" stroke-width="1.3" d="M1 6l4-4.5L9 6"/></svg>
<div class="a" style="left:0px;top:197px;width:1920px;height:46px;background:#e6e6e6"></div>
<div class="a" style="left:5px;top:207px;width:102px;height:26px;background:#fff;border:1px solid #c6c6c6"></div>
<div class="t" style="transform:scaleX(1.0285);left:11.85px;top:214.64px;font-size:13px;color:#262626;">A54</div>
<svg class="a" style="left:92px;top:217px;" width="8" height="5" viewBox="0 0 8 5"><path fill="#666" d="M0 0h8L4 4.5z"/></svg>
<div class="a" style="left:121px;top:214px;width:2px;height:2px;background:#8a8a8a"></div>
<div class="a" style="left:121px;top:219px;width:2px;height:2px;background:#8a8a8a"></div>
<div class="a" style="left:121px;top:224px;width:2px;height:2px;background:#8a8a8a"></div>
<div class="a" style="left:137px;top:207px;width:110px;height:26px;background:#fff;border:1px solid #c6c6c6"></div>
<svg class="a" style="left:150px;top:214px;" width="12" height="12" viewBox="0 0 12 12"><path stroke="#a6a6a6" stroke-width="1.3" d="M1 1l10 10M11 1L1 11"/></svg>
<svg class="a" style="left:185px;top:214px;" width="14" height="12" viewBox="0 0 14 12"><path fill="none" stroke="#c6c6c6" stroke-width="2" d="M1 6l4 4.5L13 1"/></svg>
<div class="t" style="transform:scaleX(1.3699);left:221.35px;top:213.54px;font-size:13px;color:#555;"><i style="font-family:'Liberation Serif';font-weight:bold">f</i><i style="font-family:'Liberation Serif';font-size:10px;font-weight:bold">x</i></div>
<div class="a" style="left:250px;top:207px;width:1665px;height:26px;background:#fff;border:1px solid #c6c6c6"></div>
<svg class="a" style="left:1901px;top:217px;" width="10" height="6" viewBox="0 0 10 6"><path fill="none" stroke="#555" stroke-width="1.3" d="M1 1l4 4 4-4"/></svg>
<div class="a" style="left:0px;top:243px;width:1899px;height:20px;background:#e6e6e6"></div>
<div class="a" style="left:0px;top:262px;width:1899px;height:1px;background:#9e9e9e"></div>
<svg class="a" style="left:9px;top:246px;" width="13" height="13" viewBox="0 0 13 13"><path fill="#b4b4b4" d="M13 0v13H0z"/></svg>
<div class="a" style="left:25px;top:243px;width:1px;height:786px;background:#9e9e9e"></div>
<div class="a" style="left:114px;top:244px;width:1px;height:18px;background:#bdbdbd"></div>
<div class="t" style="left:25px;top:245px;width:90px;text-align:center;font-size:12.5px;line-height:16px;color:#222">A</div>
<div class="a" style="left:693px;top:244px;width:1px;height:18px;background:#bdbdbd"></div>
<div class="t" style="left:115px;top:245px;width:579px;text-align:center;font-size:12.5px;line-height:16px;color:#222">B</div>
<div class="a" style="left:755px;top:244px;width:1px;height:18px;background:#bdbdbd"></div>
<div class="t" style="left:694px;top:245px;width:62px;text-align:center;font-size:12.5px;line-height:16px;color:#222">C</div>
<div class="a" style="left:817px;top:244px;width:1px;height:18px;background:#bdbdbd"></div>
<div class="t" style="left:756px;top:245px;width:62px;text-align:center;font-size:12.5px;line-height:16px;color:#222">D</div>
<div class="a" style="left:879px;top:244px;width:1px;height:18px;background:#bdbdbd"></div>
<div class="t" style="left:818px;top:245px;width:62px;text-align:center;font-size:12.5px;line-height:16px;color:#222">E</div>
<div class="a" style="left:941px;top:244px;width:1px;height:18px;background:#bdbdbd"></div>
<div class="t" style="left:880px;top:245px;width:62px;text-align:center;font-size:12.5px;line-height:16px;color:#222">F</div>
<div class="a" style="left:1003px;top:244px;width:1px;height:18px;background:#bdbdbd"></div>
<div class="t" style="left:942px;top:245px;width:62px;text-align:center;font-size:12.5px;line-height:16px;color:#222">G</div>
<div class="a" style="left:1065px;top:244px;width:1px;height:18px;background:#bdbdbd"></div>
<div class="t" style="left:1004px;top:245px;width:62px;text-align:center;font-size:12.5px;line-height:16px;color:#222">H</div>
<div class="a" style="left:1127px;top:244px;width:1px;height:18px;background:#bdbdbd"></div>
<div class="t" style="left:1066px;top:245px;width:62px;text-align:center;font-size:12.5px;line-height:16px;color:#222">I</div>
<div class="a" style="left:1189px;top:244px;width:1px;height:18px;background:#bdbdbd"></div>
<div class="t" style="left:1128px;top:245px;width:62px;text-align:center;font-size:12.5px;line-height:16px;color:#222">J</div>
<div class="a" style="left:1251px;top:244px;width:1px;height:18px;background:#bdbdbd"></div>
<div class="t" style="left:1190px;top:245px;width:62px;text-align:center;font-size:12.5px;line-height:16px;color:#222">K</div>
<div class="a" style="left:1313px;top:244px;width:1px;height:18px;background:#bdbdbd"></div>
<div class="t" style="left:1252px;top:245px;width:62px;text-align:center;font-size:12.5px;line-height:16px;color:#222">L</div>
<div class="a" style="left:1375px;top:244px;width:1px;height:18px;background:#bdbdbd"></div>
<div class="t" style="left:1314px;top:245px;width:62px;text-align:center;font-size:12.5px;line-height:16px;color:#222">M</div>
<div class="a" style="left:1437px;top:244px;width:1px;height:18px;background:#bdbdbd"></div>
<div class="t" style="left:1376px;top:245px;width:62px;text-align:center;font-size:12.5px;line-height:16px;color:#222">N</div>
<div class="a" style="left:1499px;top:244px;width:1px;height:18px;background:#bdbdbd"></div>
<div class="t" style="left:1438px;top:245px;width:62px;text-align:center;font-size:12.5px;line-height:16px;color:#222">O</div>
<div class="a" style="left:1561px;top:244px;width:1px;height:18px;background:#bdbdbd"></div>
<div class="t" style="left:1500px;top:245px;width:62px;text-align:center;font-size:12.5px;line-height:16px;color:#222">P</div>
<div class="a" style="left:1623px;top:244px;width:1px;height:18px;background:#bdbdbd"></div>
<div class="t" style="left:1562px;top:245px;width:62px;text-align:center;font-size:12.5px;line-height:16px;color:#222">Q</div>
<div class="a" style="left:1685px;top:244px;width:1px;height:18px;background:#bdbdbd"></div>
<div class="t" style="left:1624px;top:245px;width:62px;text-align:center;font-size:12.5px;line-height:16px;color:#222">R</div>
<div class="a" style="left:1747px;top:244px;width:1px;height:18px;background:#bdbdbd"></div>
<div class="t" style="left:1686px;top:245px;width:62px;text-align:center;font-size:12.5px;line-height:16px;color:#222">S</div>
<div class="a" style="left:1809px;top:244px;width:1px;height:18px;background:#bdbdbd"></div>
<div class="t" style="left:1748px;top:245px;width:62px;text-align:center;font-size:12.5px;line-height:16px;color:#222">T</div>
<div class="a" style="left:1871px;top:244px;width:1px;height:18px;background:#bdbdbd"></div>
<div class="t" style="left:1810px;top:245px;width:62px;text-align:center;font-size:12.5px;line-height:16px;color:#222">U</div>
<div class="a" style="left:0px;top:263px;width:25px;height:766px;background:#e6e6e6"></div>
<div class="a" style="left:0px;top:342px;width:25px;height:1px;background:#c4c4c4"></div>
<div class="t" style="left:0;top:321px;width:25px;text-align:center;font-size:12.5px;line-height:16px;color:#222">1</div>
<div class="a" style="left:0px;top:362px;width:25px;height:1px;background:#c4c4c4"></div>
<div class="t" style="left:0;top:346px;width:25px;text-align:center;font-size:12.5px;line-height:16px;color:#222">2</div>
<div class="a" style="left:0px;top:382px;width:25px;height:1px;background:#c4c4c4"></div>
<div class="t" style="left:0;top:366px;width:25px;text-align:center;font-size:12.5px;line-height:16px;color:#222">3</div>
<div class="a" style="left:0px;top:402px;width:25px;height:1px;background:#c4c4c4"></div>
<div class="t" style="left:0;top:386px;width:25px;text-align:center;font-size:12.5px;line-height:16px;color:#222">4</div>
<div class="a" style="left:0px;top:422px;width:25px;height:1px;background:#c4c4c4"></div>
<div class="t" style="left:0;top:406px;width:25px;text-align:center;font-size:12.5px;line-height:16px;color:#222">5</div>
<div class="a" style="left:0px;top:442px;width:25px;height:1px;background:#c4c4c4"></div>
<div class="t" style="left:0;top:426px;width:25px;text-align:center;font-size:12.5px;line-height:16px;color:#222">6</div>
<div class="a" style="left:0px;top:462px;width:25px;height:1px;background:#c4c4c4"></div>
<div class="t" style="left:0;top:446px;width:25px;text-align:center;font-size:12.5px;line-height:16px;color:#222">7</div>
<div class="a" style="left:0px;top:482px;width:25px;height:1px;background:#c4c4c4"></div>
<div class="t" style="left:0;top:466px;width:25px;text-align:center;font-size:12.5px;line-height:16px;color:#222">8</div>
<div class="a" style="left:0px;top:502px;width:25px;height:1px;background:#c4c4c4"></div>
<div class="t" style="left:0;top:486px;width:25px;text-align:center;font-size:12.5px;line-height:16px;color:#222">9</div>
<div class="a" style="left:0px;top:522px;width:25px;height:1px;background:#c4c4c4"></div>
<div class="t" style="left:0;top:506px;width:25px;text-align:center;font-size:12.5px;line-height:16px;color:#222">10</div>
<div class="a" style="left:0px;top:542px;width:25px;height:1px;background:#c4c4c4"></div>
<div class="t" style="left:0;top:526px;width:25px;text-align:center;font-size:12.5px;line-height:16px;color:#222">11</div>
<div class="a" style="left:0px;top:562px;width:25px;height:1px;background:#c4c4c4"></div>
<div class="t" style="left:0;top:546px;width:25px;text-align:center;font-size:12.5px;line-height:16px;color:#222">12</div>
<div class="a" style="left:0px;top:582px;width:25px;height:1px;background:#c4c4c4"></div>
<div class="t" style="left:0;top:566px;width:25px;text-align:center;font-size:12.5px;line-height:16px;color:#222">13</div>
<div class="a" style="left:0px;top:602px;width:25px;height:1px;background:#c4c4c4"></div>
<div class="t" style="left:0;top:586px;width:25px;text-align:center;font-size:12.5px;line-height:16px;color:#222">14</div>
<div class="a" style="left:0px;top:622px;width:25px;height:1px;background:#c4c4c4"></div>
<div class="t" style="left:0;top:606px;width:25px;text-align:center;font-size:12.5px;line-height:16px;color:#222">15</div>
<div class="a" style="left:0px;top:642px;width:25px;height:1px;background:#c4c4c4"></div>
<div class="t" style="left:0;top:626px;width:25px;text-align:center;font-size:12.5px;line-height:16px;color:#222">16</div>
<div class="a" style="left:0px;top:662px;width:25px;height:1px;background:#c4c4c4"></div>
<div class="t" style="left:0;top:646px;width:25px;text-align:center;font-size:12.5px;line-height:16px;color:#222">17</div>
<div class="a" style="left:0px;top:682px;width:25px;height:1px;background:#c4c4c4"></div>
<div class="t" style="left:0;top:666px;width:25px;text-align:center;font-size:12.5px;line-height:16px;color:#222">18</div>
<div class="a" style="left:0px;top:702px;width:25px;height:1px;background:#c4c4c4"></div>
<div class="t" style="left:0;top:686px;width:25px;text-align:center;font-size:12.5px;line-height:16px;color:#222">19</div>
<div class="a" style="left:0px;top:722px;width:25px;height:1px;background:#c4c4c4"></div>
<div class="t" style="left:0;top:706px;width:25px;text-align:center;font-size:12.5px;line-height:16px;color:#222">20</div>
<div class="a" style="left:0px;top:742px;width:25px;height:1px;background:#c4c4c4"></div>
<div class="t" style="left:0;top:726px;width:25px;text-align:center;font-size:12.5px;line-height:16px;color:#222">21</div>
<div class="a" style="left:0px;top:762px;width:25px;height:1px;background:#c4c4c4"></div>
<div class="t" style="left:0;top:746px;width:25px;text-align:center;font-size:12.5px;line-height:16px;color:#222">22</div>
<div class="a" style="left:0px;top:782px;width:25px;height:1px;background:#c4c4c4"></div>
<div class="t" style="left:0;top:766px;width:25px;text-align:center;font-size:12.5px;line-height:16px;color:#222">23</div>
<div class="a" style="left:0px;top:802px;width:25px;height:1px;background:#c4c4c4"></div>
<div class="t" style="left:0;top:786px;width:25px;text-align:center;font-size:12.5px;line-height:16px;color:#222">24</div>
<div class="a" style="left:0px;top:822px;width:25px;height:1px;background:#c4c4c4"></div>
<div class="t" style="left:0;top:806px;width:25px;text-align:center;font-size:12.5px;line-height:16px;color:#222">25</div>
<div class="a" style="left:0px;top:842px;width:25px;height:1px;background:#c4c4c4"></div>
<div class="t" style="left:0;top:826px;width:25px;text-align:center;font-size:12.5px;line-height:16px;color:#222">26</div>
<div class="a" style="left:0px;top:862px;width:25px;height:1px;background:#c4c4c4"></div>
<div class="t" style="left:0;top:846px;width:25px;text-align:center;font-size:12.5px;line-height:16px;color:#222">27</div>
<div class="a" style="left:0px;top:882px;width:25px;height:1px;background:#c4c4c4"></div>
<div class="t" style="left:0;top:866px;width:25px;text-align:center;font-size:12.5px;line-height:16px;color:#222">28</div>
<div class="a" style="left:0px;top:902px;width:25px;height:1px;background:#c4c4c4"></div>
<div class="t" style="left:0;top:886px;width:25px;text-align:center;font-size:12.5px;line-height:16px;color:#222">29</div>
<div class="a" style="left:0px;top:922px;width:25px;height:1px;background:#c4c4c4"></div>
<div class="t" style="left:0;top:906px;width:25px;text-align:center;font-size:12.5px;line-height:16px;color:#222">30</div>
<div class="a" style="left:0px;top:942px;width:25px;height:1px;background:#c4c4c4"></div>
<div class="t" style="left:0;top:926px;width:25px;text-align:center;font-size:12.5px;line-height:16px;color:#222">31</div>
<div class="a" style="left:0px;top:962px;width:25px;height:1px;background:#c4c4c4"></div>
<div class="t" style="left:0;top:946px;width:25px;text-align:center;font-size:12.5px;line-height:16px;color:#222">32</div>
<div class="a" style="left:0px;top:982px;width:25px;height:1px;background:#c4c4c4"></div>
<div class="t" style="left:0;top:966px;width:25px;text-align:center;font-size:12.5px;line-height:16px;color:#222">33</div>
<div class="a" style="left:0px;top:1002px;width:25px;height:1px;background:#c4c4c4"></div>
<div class="t" style="left:0;top:986px;width:25px;text-align:center;font-size:12.5px;line-height:16px;color:#222">34</div>
<div class="a" style="left:0px;top:1022px;width:25px;height:1px;background:#c4c4c4"></div>
<div class="t" style="left:0;top:1006px;width:25px;text-align:center;font-size:12.5px;line-height:16px;color:#222">35</div>
<div class="a" style="left:26px;top:263px;width:1872px;height:766px;background:#fff"></div>
<div class="a" style="left:1898px;top:263px;width:1px;height:766px;background:#a0a0a0"></div>
<div class="a" style="left:26px;top:1029px;width:1873px;height:1px;background:#a0a0a0"></div>
<div class="a" style="left:1899px;top:243px;width:21px;height:786px;background:#e6e6e6"></div>
<div class="a" style="left:1902px;top:260px;width:15px;height:755px;background:#dadada"></div>
<div class="a" style="left:1902px;top:245px;width:15px;height:15px;background:#fff;border:1px solid #a6a6a6"></div>
<svg class="a" style="left:1905px;top:250px;" width="9" height="5" viewBox="0 0 9 5"><path fill="#666" d="M0 5L4.5 0 9 5z"/></svg>
<div class="a" style="left:1902px;top:260px;width:15px;height:265px;background:#fff;border:1px solid #a6a6a6"></div>
<div class="a" style="left:1902px;top:1015px;width:15px;height:15px;background:#fff;border:1px solid #c6c6c6"></div>
<svg class="a" style="left:1905px;top:1020px;" width="9" height="5" viewBox="0 0 9 5"><path fill="#666" d="M0 0h9L4.5 5z"/></svg>
<div class="a" style="left:59px;top:290px;width:598px;height:480px;background:#f4f4f4"></div>
<div class="t" style="transform:scaleX(0.8967);left:84.05px;top:313.18px;font-size:31px;color:#5a5a5a;">Add numbers like a champ</div>
<div class="a" style="left:84px;top:354px;width:548px;height:3px;background:#217346"></div>
<div class="t" style="transform:scaleX(0.8990);left:82.90px;top:370.98px;font-size:16px;color:#3f3f3f;">Here are some ways to add up numbers in Excel:</div>
<svg class="a" style="left:84px;top:393.9px;" width="39" height="39" viewBox="0 0 39 39"><circle cx="19.5" cy="19.5" r="19.4" fill="#217346"/></svg>
<div class="t" style="left:84px;top:401.9px;width:39px;text-align:center;font-size:21px;line-height:24px;color:#fff;font-weight:bold">1</div>
<svg class="a" style="left:84px;top:444.6px;" width="39" height="39" viewBox="0 0 39 39"><circle cx="19.5" cy="19.5" r="19.4" fill="#217346"/></svg>
<div class="t" style="left:84px;top:452.6px;width:39px;text-align:center;font-size:21px;line-height:24px;color:#fff;font-weight:bold">2</div>
<svg class="a" style="left:84px;top:497.0px;" width="39" height="39" viewBox="0 0 39 39"><circle cx="19.5" cy="19.5" r="19.4" fill="#217346"/></svg>
<div class="t" style="left:84px;top:505.0px;width:39px;text-align:center;font-size:21px;line-height:24px;color:#fff;font-weight:bold">3</div>
<svg class="a" style="left:84px;top:547.8px;" width="39" height="39" viewBox="0 0 39 39"><circle cx="19.5" cy="19.5" r="19.4" fill="#217346"/></svg>
<div class="t" style="left:84px;top:555.8px;width:39px;text-align:center;font-size:21px;line-height:24px;color:#fff;font-weight:bold">4</div>
<svg class="a" style="left:84px;top:597.5px;" width="39" height="39" viewBox="0 0 39 39"><circle cx="19.5" cy="19.5" r="19.4" fill="#217346"/></svg>
<div class="t" style="left:84px;top:605.5px;width:39px;text-align:center;font-size:21px;line-height:24px;color:#fff;font-weight:bold">5</div>
<div class="t" style="transform:scaleX(0.9233);left:135.50px;top:406.28px;font-size:16px;color:#3f3f3f;">Select the yellow cell under the amounts for fruit.</div>
<div class="t" style="transform:scaleX(0.9170);left:135.50px;top:457.48px;font-size:16px;color:#3f3f3f;">Type =<b style="color:#262626">SUM(D4:D7)</b>, and then press enter. When you're done, you'll see</div>
<div class="t" style="transform:scaleX(0.9204);left:135.50px;top:476.38px;font-size:16px;color:#3f3f3f;">the result of 170.</div>
<div class="t" style="transform:scaleX(0.9101);left:135.50px;top:509.38px;font-size:16px;color:#3f3f3f;">Here's another way to add, using a shortcut key. Select the yellow cell</div>
<div class="t" style="transform:scaleX(0.9294);left:135.50px;top:528.58px;font-size:16px;color:#3f3f3f;">under the amounts for meat.</div>
<div class="t" style="transform:scaleX(0.8361);left:135.50px;top:560.08px;font-size:16px;color:#3f3f3f;">Press</div>
<div class="a" style="left:173px;top:553px;width:46px;height:27px;border:1.5px solid #262626;border-radius:5px"></div>
<div class="t" style="transform:scaleX(1.0793);left:186.45px;top:561.38px;font-size:11px;color:#222;letter-spacing:1px">Alt</div>
<div class="a" style="left:225px;top:553px;width:45px;height:27px;border:1.5px solid #262626;border-radius:5px"></div>
<div class="t" style="transform:scaleX(1.1650);left:243.25px;top:561.88px;font-size:11px;color:#222;">=</div>
<div class="t" style="transform:scaleX(0.8852);left:275.50px;top:560.08px;font-size:16px;color:#3f3f3f;">first. Then, press <b style="color:#262626">Enter</b>.</div>
<div class="t" style="transform:scaleX(0.9111);left:135.50px;top:610.08px;font-size:16px;color:#3f3f3f;">Now add only the numbers over 50. Select the last yellow cell. Type</div>
<div class="t" style="transform:scaleX(0.9161);left:135.50px;top:629.38px;font-size:16px;color:#3f3f3f;">=<b style="color:#262626">SUMIF(D11:D15,"&gt;50")</b> and then press <b style="color:#262626">Enter</b>. The result is 100.</div>
<div class="a" style="left:84px;top:660px;width:548px;height:3px;background:#217346"></div>
<svg class="a" style="left:84px;top:689px;" width="288" height="58" viewBox="0 0 288 58"><path d="M.5 .5h286v36H150.5v5.5h7l-14.5 14-14.5-14h7v-5.5H.5z" fill="#d9d9d9" stroke="#86bba0" stroke-width="1"/></svg>
<div class="t" style="transform:scaleX(1.0164);left:134.70px;top:701.28px;font-size:16px;color:#1e7145;">Dive down for more detail</div>
<svg class="a" style="left:509px;top:688px;" width="125" height="40" viewBox="0 0 125 40"><path d="M1.25 1.25h105v11.6h7.3v-5.8l9.2 11.9-9.2 11.9v-5.8h-7.3v12.5H1.25z" fill="#fff" stroke="#1e7145" stroke-width="1.25"/></svg>
<div class="t" style="transform:scaleX(0.9942);left:529.00px;top:701.28px;font-size:16px;color:#1e7145;">Next step</div>
<div class="a" style="left:61px;top:840px;width:598px;height:189px;background:#f4f4f4"></div>
<div class="t" style="transform:scaleX(0.9074);left:86.35px;top:863.58px;font-size:31px;color:#5a5a5a;">More about the SUM function</div>
<div class="a" style="left:86px;top:905px;width:548px;height:3px;background:#217346"></div>
<div class="t" style="transform:scaleX(0.9180);left:82.50px;top:923.38px;font-size:16px;color:#3f3f3f;">In some of the above tips, we taught you how to use the SUM function. Here are</div>
<div class="t" style="transform:scaleX(0.9277);left:82.50px;top:942.28px;font-size:16px;color:#3f3f3f;">more details about it. Double-click a yellow cell on the right, and then read along with</div>
<div class="t" style="transform:scaleX(0.9502);left:82.50px;top:962.28px;font-size:16px;color:#3f3f3f;">the text below.</div>
<div class="t" style="transform:scaleX(0.9241);left:82.50px;top:1001.18px;font-size:16px;color:#3f3f3f;">If the SUM function could talk, it would say this:</div>
<div class="a" style="left:694px;top:362px;width:125px;height:20px;background:#339966"></div>
<div class="t" style="left:696.83px;top:366.53px;font-size:13.5px;color:#fff;">Fruit</div>
<div class="t" style="transform:scaleX(1.0993);left:758.53px;top:366.53px;font-size:13.5px;color:#fff;">Amount</div>
<div class="a" style="left:694px;top:382px;width:125px;height:80px;background:#f2f2f2"></div>
<div class="t" style="left:696.83px;top:386.53px;font-size:13.5px;color:#000;">Apples</div>
<div class="t" style="left:754px;top:386.53px;width:62px;text-align:right;font-size:13.5px;color:#000;letter-spacing:-0.2px">50</div>
<div class="t" style="left:696.83px;top:406.53px;font-size:13.5px;color:#000;">Oranges</div>
<div class="t" style="left:754px;top:406.53px;width:62px;text-align:right;font-size:13.5px;color:#000;letter-spacing:-0.2px">20</div>
<div class="t" style="left:696.83px;top:426.53px;font-size:13.5px;color:#000;">Bananas</div>
<div class="t" style="left:754px;top:426.53px;width:62px;text-align:right;font-size:13.5px;color:#000;letter-spacing:-0.2px">60</div>
<div class="t" style="left:696.83px;top:446.53px;font-size:13.5px;color:#000;">Lemons</div>
<div class="t" style="left:754px;top:446.53px;width:62px;text-align:right;font-size:13.5px;color:#000;letter-spacing:-0.2px">40</div>
<div class="a" style="left:756px;top:462px;width:63px;height:21px;background:#ffff99;border:1px solid #bfbfbf"></div>
<div class="a" style="left:880px;top:362px;width:125px;height:20px;background:#339966"></div>
<div class="t" style="left:882.83px;top:366.53px;font-size:13.5px;color:#fff;">Meat</div>
<div class="t" style="transform:scaleX(1.0993);left:944.53px;top:366.53px;font-size:13.5px;color:#fff;">Amount</div>
<div class="a" style="left:880px;top:382px;width:125px;height:80px;background:#f2f2f2"></div>
<div class="t" style="left:882.83px;top:386.53px;font-size:13.5px;color:#000;">Beef</div>
<div class="t" style="left:940px;top:386.53px;width:62px;text-align:right;font-size:13.5px;color:#000;letter-spacing:-0.2px">50</div>
<div class="t" style="left:882.83px;top:406.53px;font-size:13.5px;color:#000;">Chicken</div>
<div class="t" style="left:940px;top:406.53px;width:62px;text-align:right;font-size:13.5px;color:#000;letter-spacing:-0.2px">30</div>
<div class="t" style="left:882.83px;top:426.53px;font-size:13.5px;color:#000;">Pork</div>
<div class="t" style="left:940px;top:426.53px;width:62px;text-align:right;font-size:13.5px;color:#000;letter-spacing:-0.2px">10</div>
<div class="t" style="left:882.83px;top:446.53px;font-size:13.5px;color:#000;">Fish</div>
<div class="t" style="left:940px;top:446.53px;width:62px;text-align:right;font-size:13.5px;color:#000;letter-spacing:-0.2px">50</div>
<div class="a" style="left:942px;top:462px;width:63px;height:21px;background:#ffff99;border:1px solid #bfbfbf"></div>
<div class="a" style="left:694px;top:502px;width:125px;height:20px;background:#339966"></div>
<div class="t" style="left:696.83px;top:506.53px;font-size:13.5px;color:#fff;">Item</div>
<div class="t" style="transform:scaleX(1.0993);left:758.53px;top:506.53px;font-size:13.5px;color:#fff;">Amount</div>
<div class="a" style="left:694px;top:522px;width:125px;height:100px;background:#f2f2f2"></div>
<div class="t" style="left:696.83px;top:526.53px;font-size:13.5px;color:#000;">Bread</div>
<div class="t" style="left:754px;top:526.53px;width:62px;text-align:right;font-size:13.5px;color:#000;letter-spacing:-0.2px">50</div>
<div class="t" style="left:696.83px;top:546.53px;font-size:13.5px;color:#000;">Donuts</div>
<div class="t" style="left:754px;top:546.53px;width:62px;text-align:right;font-size:13.5px;color:#000;letter-spacing:-0.2px">100</div>
<div class="t" style="left:696.83px;top:566.53px;font-size:13.5px;color:#000;">Cookies</div>
<div class="t" style="left:754px;top:566.53px;width:62px;text-align:right;font-size:13.5px;color:#000;letter-spacing:-0.2px">40</div>
<div class="t" style="left:696.83px;top:586.53px;font-size:13.5px;color:#000;">Cakes</div>
<div class="t" style="left:754px;top:586.53px;width:62px;text-align:right;font-size:13.5px;color:#000;letter-spacing:-0.2px">50</div>
<div class="t" style="left:696.83px;top:606.53px;font-size:13.5px;color:#000;">Pies</div>
<div class="t" style="left:754px;top:606.53px;width:62px;text-align:right;font-size:13.5px;color:#000;letter-spacing:-0.2px">20</div>
<div class="a" style="left:756px;top:622px;width:63px;height:21px;background:#ffff99;border:1px solid #bfbfbf"></div>
<div class="a" style="left:880px;top:502px;width:125px;height:20px;background:#339966"></div>
<div class="t" style="left:882.83px;top:506.53px;font-size:13.5px;color:#fff;">Item</div>
<div class="t" style="transform:scaleX(1.0993);left:944.53px;top:506.53px;font-size:13.5px;color:#fff;">Amount</div>
<div class="a" style="left:880px;top:522px;width:125px;height:100px;background:#f2f2f2"></div>
<div class="t" style="left:882.83px;top:526.53px;font-size:13.5px;color:#000;">Bread</div>
<div class="t" style="left:940px;top:526.53px;width:62px;text-align:right;font-size:13.5px;color:#000;letter-spacing:-0.2px">50</div>
<div class="t" style="left:882.83px;top:546.53px;font-size:13.5px;color:#000;">Donuts</div>
<div class="t" style="left:940px;top:546.53px;width:62px;text-align:right;font-size:13.5px;color:#000;letter-spacing:-0.2px">100</div>
<div class="t" style="left:882.83px;top:566.53px;font-size:13.5px;color:#000;">Cookies</div>
<div class="t" style="left:940px;top:566.53px;width:62px;text-align:right;font-size:13.5px;color:#000;letter-spacing:-0.2px">40</div>
<div class="t" style="left:882.83px;top:586.53px;font-size:13.5px;color:#000;">Cakes</div>
<div class="t" style="left:940px;top:586.53px;width:62px;text-align:right;font-size:13.5px;color:#000;letter-spacing:-0.2px">50</div>
<div class="t" style="left:882.83px;top:606.53px;font-size:13.5px;color:#000;">Pies</div>
<div class="t" style="left:940px;top:606.53px;width:62px;text-align:right;font-size:13.5px;color:#000;letter-spacing:-0.2px">20</div>
<div class="a" style="left:941px;top:620px;width:65px;height:23px;background:#f2f2f2;border:2.5px solid #f4b183"></div>
<svg class="a" style="left:968px;top:644px;" width="40" height="36" viewBox="0 0 40 36"><path fill="none" stroke="#f4b183" stroke-width="2" d="M37 31.5c-9 3-23 0-29.5-23"/><path fill="#f4b183" d="M7.4 5.5l-4.4 7 6.5-1z M7.5 5l-4.8 7.5 7.2-.6z"/></svg>
<svg class="a" style="left:1009px;top:651px;" width="33" height="45" viewBox="0 0 33 45"><circle cx="16" cy="16.5" r="12.5" fill="none" stroke="#f4b183" stroke-width="6"/><path fill="#f4b183" d="M8 27l-7 13 6-1.5 3 5 6-13zM24 27l7 13-6-1.5-3 5-6-13z"/></svg>
<div class="t" style="transform:scaleX(1.0002);left:1047.15px;top:654.10px;font-size:15px;color:#f4b183;font-weight:bold;">EXTRA CREDIT</div>
<div class="t" style="transform:scaleX(1.0091);left:1047.23px;top:674.23px;font-size:13.5px;color:#000;">Try adding another</div>
<div class="t" style="transform:scaleX(0.9972);left:1047.23px;top:691.93px;font-size:13.5px;color:#000;">SUMIF formula here,</div>
<div class="t" style="transform:scaleX(1.0284);left:1047.23px;top:709.83px;font-size:13.5px;color:#000;">but add amounts that</div>
<div class="t" style="transform:scaleX(0.9764);left:1047.23px;top:727.53px;font-size:13.5px;color:#000;">are <i>less than 100</i>. The</div>
<div class="t" style="transform:scaleX(1.0000);left:1047.23px;top:745.33px;font-size:13.5px;color:#000;">result should be 160.</div>
<div class="a" style="left:1338px;top:720px;width:502px;height:285px;box-shadow:0 3px 14px 4px rgba(0,0,0,0.22)"></div>
<svg class="a" style="left:1339px;top:721px" width="500" height="283" viewBox="0 0 500 283"><defs><linearGradient id="bgg" x1="0" y1="0" x2="1" y2="1"><stop offset="0" stop-color="#34389a"/><stop offset="0.55" stop-color="#3a3ea2"/><stop offset="1" stop-color="#2c2f78"/></linearGradient><radialGradient id="vig" cx="0.55" cy="0.45" r="0.75"><stop offset="0.5" stop-color="#000" stop-opacity="0"/><stop offset="1" stop-color="#000" stop-opacity="0.35"/></radialGradient></defs><rect width="500" height="283" fill="url(#bgg)"/><rect x="-40" y="-2" width="44" height="11" rx="5.5" fill="#5a6ab8" opacity="0.45"/><rect x="-40" y="-4" width="44" height="10" rx="5" fill="#262870" opacity="0.8"/><rect x="14" y="-2" width="44" height="11" rx="5.5" fill="#5a6ab8" opacity="0.45"/><rect x="14" y="-4" width="44" height="10" rx="5" fill="#262870" opacity="0.8"/><rect x="68" y="-2" width="44" height="11" rx="5.5" fill="#5a6ab8" opacity="0.45"/><rect x="68" y="-4" width="44" height="10" rx="5" fill="#262870" opacity="0.8"/><rect x="122" y="-2" width="44" height="11" rx="5.5" fill="#5a6ab8" opacity="0.45"/><rect x="122" y="-4" width="44" height="10" rx="5" fill="#262870" opacity="0.8"/><rect x="176" y="-2" width="44" height="11" rx="5.5" fill="#5a6ab8" opacity="0.45"/><rect x="176" y="-4" width="44" height="10" rx="5" fill="#262870" opacity="0.8"/><rect x="230" y="-2" width="44" height="11" rx="5.5" fill="#5a6ab8" opacity="0.45"/><rect x="230" y="-4" width="44" height="10" rx="5" fill="#262870" opacity="0.8"/><rect x="284" y="-2" width="44" height="11" rx="5.5" fill="#5a6ab8" opacity="0.45"/><rect x="284" y="-4" width="44" height="10" rx="5" fill="#262870" opacity="0.8"/><rect x="338" y="-2" width="44" height="11" rx="5.5" fill="#5a6ab8" opacity="0.45"/><rect x="338" y="-4" width="44" height="10" rx="5" fill="#262870" opacity="0.8"/><rect x="392" y="-2" width="44" height="11" rx="5.5" fill="#5a6ab8" opacity="0.45"/><rect x="392" y="-4" width="44" height="10" rx="5" fill="#262870" opacity="0.8"/><rect x="446" y="-2" width="44" height="11" rx="5.5" fill="#5a6ab8" opacity="0.45"/><rect x="446" y="-4" width="44" height="10" rx="5" fill="#262870" opacity="0.8"/><rect x="500" y="-2" width="44" height="11" rx="5.5" fill="#5a6ab8" opacity="0.45"/><rect x="500" y="-4" width="44" height="10" rx="5" fill="#262870" opacity="0.8"/><rect x="-14" y="15" width="44" height="11" rx="5.5" fill="#5a6ab8" opacity="0.45"/><rect x="-14" y="13" width="44" height="10" rx="5" fill="#262870" opacity="0.8"/><rect x="40" y="15" width="44" height="11" rx="5.5" fill="#5a6ab8" opacity="0.45"/><rect x="40" y="13" width="44" height="10" rx="5" fill="#262870" opacity="0.8"/><rect x="94" y="15" width="44" height="11" rx="5.5" fill="#5a6ab8" opacity="0.45"/><rect x="94" y="13" width="44" height="10" rx="5" fill="#262870" opacity="0.8"/><rect x="148" y="15" width="44" height="11" rx="5.5" fill="#5a6ab8" opacity="0.45"/><rect x="148" y="13" width="44" height="10" rx="5" fill="#262870" opacity="0.8"/><rect x="202" y="15" width="44" height="11" rx="5.5" fill="#5a6ab8" opacity="0.45"/><rect x="202" y="13" width="44" height="10" rx="5" fill="#262870" opacity="0.8"/><rect x="256" y="15" width="44" height="11" rx="5.5" fill="#5a6ab8" opacity="0.45"/><rect x="256" y="13" width="44" height="10" rx="5" fill="#262870" opacity="0.8"/><rect x="310" y="15" width="44" height="11" rx="5.5" fill="#5a6ab8" opacity="0.45"/><rect x="310" y="13" width="44" height="10" rx="5" fill="#262870" opacity="0.8"/><rect x="364" y="15" width="44" height="11" rx="5.5" fill="#5a6ab8" opacity="0.45"/><rect x="364" y="13" width="44" height="10" rx="5" fill="#262870" opacity="0.8"/><rect x="418" y="15" width="44" height="11" rx="5.5" fill="#5a6ab8" opacity="0.45"/><rect x="418" y="13" width="44" height="10" rx="5" fill="#262870" opacity="0.8"/><rect x="472" y="15" width="44" height="11" rx="5.5" fill="#5a6ab8" opacity="0.45"/><rect x="472" y="13" width="44" height="10" rx="5" fill="#262870" opacity="0.8"/><rect x="526" y="15" width="44" height="11" rx="5.5" fill="#5a6ab8" opacity="0.45"/><rect x="526" y="13" width="44" height="10" rx="5" fill="#262870" opacity="0.8"/><rect x="-40" y="32" width="44" height="11" rx="5.5" fill="#5a6ab8" opacity="0.45"/><rect x="-40" y="30" width="44" height="10" rx="5" fill="#262870" opacity="0.8"/><rect x="14" y="32" width="44" height="11" rx="5.5" fill="#5a6ab8" opacity="0.45"/><rect x="14" y="30" width="44" height="10" rx="5" fill="#262870" opacity="0.8"/><rect x="68" y="32" width="44" height="11" rx="5.5" fill="#5a6ab8" opacity="0.45"/><rect x="68" y="30" width="44" height="10" rx="5" fill="#262870" opacity="0.8"/><rect x="122" y="32" width="44" height="11" rx="5.5" fill="#5a6ab8" opacity="0.45"/><rect x="122" y="30" width="44" height="10" rx="5" fill="#262870" opacity="0.8"/><rect x="176" y="32" width="44" height="11" rx="5.5" fill="#5a6ab8" opacity="0.45"/><rect x="176" y="30" width="44" height="10" rx="5" fill="#262870" opacity="0.8"/><rect x="230" y="32" width="44" height="11" rx="5.5" fill="#5a6ab8" opacity="0.45"/><rect x="230" y="30" width="44" height="10" rx="5" fill="#262870" opacity="0.8"/><rect x="284" y="32" width="44" height="11" rx="5.5" fill="#5a6ab8" opacity="0.45"/><rect x="284" y="30" width="44" height="10" rx="5" fill="#262870" opacity="0.8"/><rect x="338" y="32" width="44" height="11" rx="5.5" fill="#5a6ab8" opacity="0.45"/><rect x="338" y="30" width="44" height="10" rx="5" fill="#262870" opacity="0.8"/><rect x="392" y="32" width="44" height="11" rx="5.5" fill="#5a6ab8" opacity="0.45"/><rect x="392" y="30" width="44" height="10" rx="5" fill="#262870" opacity="0.8"/><rect x="446" y="32" width="44" height="11" rx="5.5" fill="#5a6ab8" opacity="0.45"/><rect x="446" y="30" width="44" height="10" rx="5" fill="#262870" opacity="0.8"/><rect x="500" y="32" width="44" height="11" rx="5.5" fill="#5a6ab8" opacity="0.45"/><rect x="500" y="30" width="44" height="10" rx="5" fill="#262870" opacity="0.8"/><rect x="-14" y="49" width="44" height="11" rx="5.5" fill="#5a6ab8" opacity="0.45"/><rect x="-14" y="47" width="44" height="10" rx="5" fill="#262870" opacity="0.8"/><rect x="40" y="49" width="44" height="11" rx="5.5" fill="#5a6ab8" opacity="0.45"/><rect x="40" y="47" width="44" height="10" rx="5" fill="#262870" opacity="0.8"/><rect x="94" y="49" width="44" height="11" rx="5.5" fill="#5a6ab8" opacity="0.45"/><rect x="94" y="47" width="44" height="10" rx="5" fill="#262870" opacity="0.8"/><rect x="148" y="49" width="44" height="11" rx="5.5" fill="#5a6ab8" opacity="0.45"/><rect x="148" y="47" width="44" height="10" rx="5" fill="#262870" opacity="0.8"/><rect x="202" y="49" width="44" height="11" rx="5.5" fill="#5a6ab8" opacity="0.45"/><rect x="202" y="47" width="44" height="10" rx="5" fill="#262870" opacity="0.8"/><rect x="256" y="49" width="44" height="11" rx="5.5" fill="#5a6ab8" opacity="0.45"/><rect x="256" y="47" width="44" height="10" rx="5" fill="#262870" opacity="0.8"/><rect x="310" y="49" width="44" height="11" rx="5.5" fill="#5a6ab8" opacity="0.45"/><rect x="310" y="47" width="44" height="10" rx="5" fill="#262870" opacity="0.8"/><rect x="364" y="49" width="44" height="11" rx="5.5" fill="#5a6ab8" opacity="0.45"/><rect x="364" y="47" width="44" height="10" rx="5" fill="#262870" opacity="0.8"/><rect x="418" y="49" width="44" height="11" rx="5.5" fill="#5a6ab8" opacity="0.45"/><rect x="418" y="47" width="44" height="10" rx="5" fill="#262870" opacity="0.8"/><rect x="472" y="49" width="44" height="11" rx="5.5" fill="#5a6ab8" opacity="0.45"/><rect x="472" y="47" width="44" height="10" rx="5" fill="#262870" opacity="0.8"/><rect x="526" y="49" width="44" height="11" rx="5.5" fill="#5a6ab8" opacity="0.45"/><rect x="526" y="47" width="44" height="10" rx="5" fill="#262870" opacity="0.8"/><rect x="-40" y="66" width="44" height="11" rx="5.5" fill="#5a6ab8" opacity="0.45"/><rect x="-40" y="64" width="44" height="10" rx="5" fill="#262870" opacity="0.8"/><rect x="14" y="66" width="44" height="11" rx="5.5" fill="#5a6ab8" opacity="0.45"/><rect x="14" y="64" width="44" height="10" rx="5" fill="#262870" opacity="0.8"/><rect x="68" y="66" width="44" height="11" rx="5.5" fill="#5a6ab8" opacity="0.45"/><rect x="68" y="64" width="44" height="10" rx="5" fill="#262870" opacity="0.8"/><rect x="122" y="66" width="44" height="11" rx="5.5" fill="#5a6ab8" opacity="0.45"/><rect x="122" y="64" width="44" height="10" rx="5" fill="#262870" opacity="0.8"/><rect x="176" y="66" width="44" height="11" rx="5.5" fill="#5a6ab8" opacity="0.45"/><rect x="176" y="64" width="44" height="10" rx="5" fill="#262870" opacity="0.8"/><rect x="230" y="66" width="44" height="11" rx="5.5" fill="#5a6ab8" opacity="0.45"/><rect x="230" y="64" width="44" height="10" rx="5" fill="#262870" opacity="0.8"/><rect x="284" y="66" width="44" height="11" rx="5.5" fill="#5a6ab8" opacity="0.45"/><rect x="284" y="64" width="44" height="10" rx="5" fill="#262870" opacity="0.8"/><rect x="338" y="66" width="44" height="11" rx="5.5" fill="#5a6ab8" opacity="0.45"/><rect x="338" y="64" width="44" height="10" rx="5" fill="#262870" opacity="0.8"/><rect x="392" y="66" width="44" height="11" rx="5.5" fill="#5a6ab8" opacity="0.45"/><rect x="392" y="64" width="44" height="10" rx="5" fill="#262870" opacity="0.8"/><rect x="446" y="66" width="44" height="11" rx="5.5" fill="#5a6ab8" opacity="0.45"/><rect x="446" y="64" width="44" height="10" rx="5" fill="#262870" opacity="0.8"/><rect x="500" y="66" width="44" height="11" rx="5.5" fill="#5a6ab8" opacity="0.45"/><rect x="500" y="64" width="44" height="10" rx="5" fill="#262870" opacity="0.8"/><rect x="-14" y="83" width="44" height="11" rx="5.5" fill="#5a6ab8" opacity="0.45"/><rect x="-14" y="81" width="44" height="10" rx="5" fill="#262870" opacity="0.8"/><rect x="40" y="83" width="44" height="11" rx="5.5" fill="#5a6ab8" opacity="0.45"/><rect x="40" y="81" width="44" height="10" rx="5" fill="#262870" opacity="0.8"/><rect x="94" y="83" width="44" height="11" rx="5.5" fill="#5a6ab8" opacity="0.45"/><rect x="94" y="81" width="44" height="10" rx="5" fill="#262870" opacity="0.8"/><rect x="148" y="83" width="44" height="11" rx="5.5" fill="#5a6ab8" opacity="0.45"/><rect x="148" y="81" width="44" height="10" rx="5" fill="#262870" opacity="0.8"/><rect x="202" y="83" width="44" height="11" rx="5.5" fill="#5a6ab8" opacity="0.45"/><rect x="202" y="81" width="44" height="10" rx="5" fill="#262870" opacity="0.8"/><rect x="256" y="83" width="44" height="11" rx="5.5" fill="#5a6ab8" opacity="0.45"/><rect x="256" y="81" width="44" height="10" rx="5" fill="#262870" opacity="0.8"/><rect x="310" y="83" width="44" height="11" rx="5.5" fill="#5a6ab8" opacity="0.45"/><rect x="310" y="81" width="44" height="10" rx="5" fill="#262870" opacity="0.8"/><rect x="364" y="83" width="44" height="11" rx="5.5" fill="#5a6ab8" opacity="0.45"/><rect x="364" y="81" width="44" height="10" rx="5" fill="#262870" opacity="0.8"/><rect x="418" y="83" width="44" height="11" rx="5.5" fill="#5a6ab8" opacity="0.45"/><rect x="418" y="81" width="44" height="10" rx="5" fill="#262870" opacity="0.8"/><rect x="472" y="83" width="44" height="11" rx="5.5" fill="#5a6ab8" opacity="0.45"/><rect x="472" y="81" width="44" height="10" rx="5" fill="#262870" opacity="0.8"/><rect x="526" y="83" width="44" height="11" rx="5.5" fill="#5a6ab8" opacity="0.45"/><rect x="526" y="81" width="44" height="10" rx="5" fill="#262870" opacity="0.8"/><rect x="-40" y="100" width="44" height="11" rx="5.5" fill="#5a6ab8" opacity="0.45"/><rect x="-40" y="98" width="44" height="10" rx="5" fill="#262870" opacity="0.8"/><rect x="14" y="100" width="44" height="11" rx="5.5" fill="#5a6ab8" opacity="0.45"/><rect x="14" y="98" width="44" height="10" rx="5" fill="#262870" opacity="0.8"/><rect x="68" y="100" width="44" height="11" rx="5.5" fill="#5a6ab8" opacity="0.45"/><rect x="68" y="98" width="44" height="10" rx="5" fill="#262870" opacity="0.8"/><rect x="122" y="100" width="44" height="11" rx="5.5" fill="#5a6ab8" opacity="0.45"/><rect x="122" y="98" width="44" height="10" rx="5" fill="#262870" opacity="0.8"/><rect x="176" y="100" width="44" height="11" rx="5.5" fill="#5a6ab8" opacity="0.45"/><rect x="176" y="98" width="44" height="10" rx="5" fill="#262870" opacity="0.8"/><rect x="230" y="100" width="44" height="11" rx="5.5" fill="#5a6ab8" opacity="0.45"/><rect x="230" y="98" width="44" height="10" rx="5" fill="#262870" opacity="0.8"/><rect x="284" y="100" width="44" height="11" rx="5.5" fill="#5a6ab8" opacity="0.45"/><rect x="284" y="98" width="44" height="10" rx="5" fill="#262870" opacity="0.8"/><rect x="338" y="100" width="44" height="11" rx="5.5" fill="#5a6ab8" opacity="0.45"/><rect x="338" y="98" width="44" height="10" rx="5" fill="#262870" opacity="0.8"/><rect x="392" y="100" width="44" height="11" rx="5.5" fill="#5a6ab8" opacity="0.45"/><rect x="392" y="98" width="44" height="10" rx="5" fill="#262870" opacity="0.8"/><rect x="446" y="100" width="44" height="11" rx="5.5" fill="#5a6ab8" opacity="0.45"/><rect x="446" y="98" width="44" height="10" rx="5" fill="#262870" opacity="0.8"/><rect x="500" y="100" width="44" height="11" rx="5.5" fill="#5a6ab8" opacity="0.45"/><rect x="500" y="98" width="44" height="10" rx="5" fill="#262870" opacity="0.8"/><rect x="-14" y="117" width="44" height="11" rx="5.5" fill="#5a6ab8" opacity="0.45"/><rect x="-14" y="115" width="44" height="10" rx="5" fill="#262870" opacity="0.8"/><rect x="40" y="117" width="44" height="11" rx="5.5" fill="#5a6ab8" opacity="0.45"/><rect x="40" y="115" width="44" height="10" rx="5" fill="#262870" opacity="0.8"/><rect x="94" y="117" width="44" height="11" rx="5.5" fill="#5a6ab8" opacity="0.45"/><rect x="94" y="115" width="44" height="10" rx="5" fill="#262870" opacity="0.8"/><rect x="148" y="117" width="44" height="11" rx="5.5" fill="#5a6ab8" opacity="0.45"/><rect x="148" y="115" width="44" height="10" rx="5" fill="#262870" opacity="0.8"/><rect x="202" y="117" width="44" height="11" rx="5.5" fill="#5a6ab8" opacity="0.45"/><rect x="202" y="115" width="44" height="10" rx="5" fill="#262870" opacity="0.8"/><rect x="256" y="117" width="44" height="11" rx="5.5" fill="#5a6ab8" opacity="0.45"/><rect x="256" y="115" width="44" height="10" rx="5" fill="#262870" opacity="0.8"/><rect x="310" y="117" width="44" height="11" rx="5.5" fill="#5a6ab8" opacity="0.45"/><rect x="310" y="115" width="44" height="10" rx="5" fill="#262870" opacity="0.8"/><rect x="364" y="117" width="44" height="11" rx="5.5" fill="#5a6ab8" opacity="0.45"/><rect x="364" y="115" width="44" height="10" rx="5" fill="#262870" opacity="0.8"/><rect x="418" y="117" width="44" height="11" rx="5.5" fill="#5a6ab8" opacity="0.45"/><rect x="418" y="115" width="44" height="10" rx="5" fill="#262870" opacity="0.8"/><rect x="472" y="117" width="44" height="11" rx="5.5" fill="#5a6ab8" opacity="0.45"/><rect x="472" y="115" width="44" height="10" rx="5" fill="#262870" opacity="0.8"/><rect x="526" y="117" width="44" height="11" rx="5.5" fill="#5a6ab8" opacity="0.45"/><rect x="526" y="115" width="44" height="10" rx="5" fill="#262870" opacity="0.8"/><rect x="-40" y="134" width="44" height="11" rx="5.5" fill="#5a6ab8" opacity="0.45"/><rect x="-40" y="132" width="44" height="10" rx="5" fill="#262870" opacity="0.8"/><rect x="14" y="134" width="44" height="11" rx="5.5" fill="#5a6ab8" opacity="0.45"/><rect x="14" y="132" width="44" height="10" rx="5" fill="#262870" opacity="0.8"/><rect x="68" y="134" width="44" height="11" rx="5.5" fill="#5a6ab8" opacity="0.45"/><rect x="68" y="132" width="44" height="10" rx="5" fill="#262870" opacity="0.8"/><rect x="122" y="134" width="44" height="11" rx="5.5" fill="#5a6ab8" opacity="0.45"/><rect x="122" y="132" width="44" height="10" rx="5" fill="#262870" opacity="0.8"/><rect x="176" y="134" width="44" height="11" rx="5.5" fill="#5a6ab8" opacity="0.45"/><rect x="176" y="132" width="44" height="10" rx="5" fill="#262870" opacity="0.8"/><rect x="230" y="134" width="44" height="11" rx="5.5" fill="#5a6ab8" opacity="0.45"/><rect x="230" y="132" width="44" height="10" rx="5" fill="#262870" opacity="0.8"/><rect x="284" y="134" width="44" height="11" rx="5.5" fill="#5a6ab8" opacity="0.45"/><rect x="284" y="132" width="44" height="10" rx="5" fill="#262870" opacity="0.8"/><rect x="338" y="134" width="44" height="11" rx="5.5" fill="#5a6ab8" opacity="0.45"/><rect x="338" y="132" width="44" height="10" rx="5" fill="#262870" opacity="0.8"/><rect x="392" y="134" width="44" height="11" rx="5.5" fill="#5a6ab8" opacity="0.45"/><rect x="392" y="132" width="44" height="10" rx="5" fill="#262870" opacity="0.8"/><rect x="446" y="134" width="44" height="11" rx="5.5" fill="#5a6ab8" opacity="0.45"/><rect x="446" y="132" width="44" height="10" rx="5" fill="#262870" opacity="0.8"/><rect x="500" y="134" width="44" height="11" rx="5.5" fill="#5a6ab8" opacity="0.45"/><rect x="500" y="132" width="44" height="10" rx="5" fill="#262870" opacity="0.8"/><rect x="-14" y="151" width="44" height="11" rx="5.5" fill="#5a6ab8" opacity="0.45"/><rect x="-14" y="149" width="44" height="10" rx="5" fill="#262870" opacity="0.8"/><rect x="40" y="151" width="44" height="11" rx="5.5" fill="#5a6ab8" opacity="0.45"/><rect x="40" y="149" width="44" height="10" rx="5" fill="#262870" opacity="0.8"/><rect x="94" y="151" width="44" height="11" rx="5.5" fill="#5a6ab8" opacity="0.45"/><rect x="94" y="149" width="44" height="10" rx="5" fill="#262870" opacity="0.8"/><rect x="148" y="151" width="44" height="11" rx="5.5" fill="#5a6ab8" opacity="0.45"/><rect x="148" y="149" width="44" height="10" rx="5" fill="#262870" opacity="0.8"/><rect x="202" y="151" width="44" height="11" rx="5.5" fill="#5a6ab8" opacity="0.45"/><rect x="202" y="149" width="44" height="10" rx="5" fill="#262870" opacity="0.8"/><rect x="256" y="151" width="44" height="11" rx="5.5" fill="#5a6ab8" opacity="0.45"/><rect x="256" y="149" width="44" height="10" rx="5" fill="#262870" opacity="0.8"/><rect x="310" y="151" width="44" height="11" rx="5.5" fill="#5a6ab8" opacity="0.45"/><rect x="310" y="149" width="44" height="10" rx="5" fill="#262870" opacity="0.8"/><rect x="364" y="151" width="44" height="11" rx="5.5" fill="#5a6ab8" opacity="0.45"/><rect x="364" y="149" width="44" height="10" rx="5" fill="#262870" opacity="0.8"/><rect x="418" y="151" width="44" height="11" rx="5.5" fill="#5a6ab8" opacity="0.45"/><rect x="418" y="149" width="44" height="10" rx="5" fill="#262870" opacity="0.8"/><rect x="472" y="151" width="44" height="11" rx="5.5" fill="#5a6ab8" opacity="0.45"/><rect x="472" y="149" width="44" height="10" rx="5" fill="#262870" opacity="0.8"/><rect x="526" y="151" width="44" height="11" rx="5.5" fill="#5a6ab8" opacity="0.45"/><rect x="526" y="149" width="44" height="10" rx="5" fill="#262870" opacity="0.8"/><rect x="-40" y="168" width="44" height="11" rx="5.5" fill="#5a6ab8" opacity="0.45"/><rect x="-40" y="166" width="44" height="10" rx="5" fill="#262870" opacity="0.8"/><rect x="14" y="168" width="44" height="11" rx="5.5" fill="#5a6ab8" opacity="0.45"/><rect x="14" y="166" width="44" height="10" rx="5" fill="#262870" opacity="0.8"/><rect x="68" y="168" width="44" height="11" rx="5.5" fill="#5a6ab8" opacity="0.45"/><rect x="68" y="166" width="44" height="10" rx="5" fill="#262870" opacity="0.8"/><rect x="122" y="168" width="44" height="11" rx="5.5" fill="#5a6ab8" opacity="0.45"/><rect x="122" y="166" width="44" height="10" rx="5" fill="#262870" opacity="0.8"/><rect x="176" y="168" width="44" height="11" rx="5.5" fill="#5a6ab8" opacity="0.45"/><rect x="176" y="166" width="44" height="10" rx="5" fill="#262870" opacity="0.8"/><rect x="230" y="168" width="44" height="11" rx="5.5" fill="#5a6ab8" opacity="0.45"/><rect x="230" y="166" width="44" height="10" rx="5" fill="#262870" opacity="0.8"/><rect x="284" y="168" width="44" height="11" rx="5.5" fill="#5a6ab8" opacity="0.45"/><rect x="284" y="166" width="44" height="10" rx="5" fill="#262870" opacity="0.8"/><rect x="338" y="168" width="44" height="11" rx="5.5" fill="#5a6ab8" opacity="0.45"/><rect x="338" y="166" width="44" height="10" rx="5" fill="#262870" opacity="0.8"/><rect x="392" y="168" width="44" height="11" rx="5.5" fill="#5a6ab8" opacity="0.45"/><rect x="392" y="166" width="44" height="10" rx="5" fill="#262870" opacity="0.8"/><rect x="446" y="168" width="44" height="11" rx="5.5" fill="#5a6ab8" opacity="0.45"/><rect x="446" y="166" width="44" height="10" rx="5" fill="#262870" opacity="0.8"/><rect x="500" y="168" width="44" height="11" rx="5.5" fill="#5a6ab8" opacity="0.45"/><rect x="500" y="166" width="44" height="10" rx="5" fill="#262870" opacity="0.8"/><rect x="-14" y="185" width="44" height="11" rx="5.5" fill="#5a6ab8" opacity="0.45"/><rect x="-14" y="183" width="44" height="10" rx="5" fill="#262870" opacity="0.8"/><rect x="40" y="185" width="44" height="11" rx="5.5" fill="#5a6ab8" opacity="0.45"/><rect x="40" y="183" width="44" height="10" rx="5" fill="#262870" opacity="0.8"/><rect x="94" y="185" width="44" height="11" rx="5.5" fill="#5a6ab8" opacity="0.45"/><rect x="94" y="183" width="44" height="10" rx="5" fill="#262870" opacity="0.8"/><rect x="148" y="185" width="44" height="11" rx="5.5" fill="#5a6ab8" opacity="0.45"/><rect x="148" y="183" width="44" height="10" rx="5" fill="#262870" opacity="0.8"/><rect x="202" y="185" width="44" height="11" rx="5.5" fill="#5a6ab8" opacity="0.45"/><rect x="202" y="183" width="44" height="10" rx="5" fill="#262870" opacity="0.8"/><rect x="256" y="185" width="44" height="11" rx="5.5" fill="#5a6ab8" opacity="0.45"/><rect x="256" y="183" width="44" height="10" rx="5" fill="#262870" opacity="0.8"/><rect x="310" y="185" width="44" height="11" rx="5.5" fill="#5a6ab8" opacity="0.45"/><rect x="310" y="183" width="44" height="10" rx="5" fill="#262870" opacity="0.8"/><rect x="364" y="185" width="44" height="11" rx="5.5" fill="#5a6ab8" opacity="0.45"/><rect x="364" y="183" width="44" height="10" rx="5" fill="#262870" opacity="0.8"/><rect x="418" y="185" width="44" height="11" rx="5.5" fill="#5a6ab8" opacity="0.45"/><rect x="418" y="183" width="44" height="10" rx="5" fill="#262870" opacity="0.8"/><rect x="472" y="185" width="44" height="11" rx="5.5" fill="#5a6ab8" opacity="0.45"/><rect x="472" y="183" width="44" height="10" rx="5" fill="#262870" opacity="0.8"/><rect x="526" y="185" width="44" height="11" rx="5.5" fill="#5a6ab8" opacity="0.45"/><rect x="526" y="183" width="44" height="10" rx="5" fill="#262870" opacity="0.8"/><rect x="-40" y="202" width="44" height="11" rx="5.5" fill="#5a6ab8" opacity="0.45"/><rect x="-40" y="200" width="44" height="10" rx="5" fill="#262870" opacity="0.8"/><rect x="14" y="202" width="44" height="11" rx="5.5" fill="#5a6ab8" opacity="0.45"/><rect x="14" y="200" width="44" height="10" rx="5" fill="#262870" opacity="0.8"/><rect x="68" y="202" width="44" height="11" rx="5.5" fill="#5a6ab8" opacity="0.45"/><rect x="68" y="200" width="44" height="10" rx="5" fill="#262870" opacity="0.8"/><rect x="122" y="202" width="44" height="11" rx="5.5" fill="#5a6ab8" opacity="0.45"/><rect x="122" y="200" width="44" height="10" rx="5" fill="#262870" opacity="0.8"/><rect x="176" y="202" width="44" height="11" rx="5.5" fill="#5a6ab8" opacity="0.45"/><rect x="176" y="200" width="44" height="10" rx="5" fill="#262870" opacity="0.8"/><rect x="230" y="202" width="44" height="11" rx="5.5" fill="#5a6ab8" opacity="0.45"/><rect x="230" y="200" width="44" height="10" rx="5" fill="#262870" opacity="0.8"/><rect x="284" y="202" width="44" height="11" rx="5.5" fill="#5a6ab8" opacity="0.45"/><rect x="284" y="200" width="44" height="10" rx="5" fill="#262870" opacity="0.8"/><rect x="338" y="202" width="44" height="11" rx="5.5" fill="#5a6ab8" opacity="0.45"/><rect x="338" y="200" width="44" height="10" rx="5" fill="#262870" opacity="0.8"/><rect x="392" y="202" width="44" height="11" rx="5.5" fill="#5a6ab8" opacity="0.45"/><rect x="392" y="200" width="44" height="10" rx="5" fill="#262870" opacity="0.8"/><rect x="446" y="202" width="44" height="11" rx="5.5" fill="#5a6ab8" opacity="0.45"/><rect x="446" y="200" width="44" height="10" rx="5" fill="#262870" opacity="0.8"/><rect x="500" y="202" width="44" height="11" rx="5.5" fill="#5a6ab8" opacity="0.45"/><rect x="500" y="200" width="44" height="10" rx="5" fill="#262870" opacity="0.8"/><rect x="-14" y="219" width="44" height="11" rx="5.5" fill="#5a6ab8" opacity="0.45"/><rect x="-14" y="217" width="44" height="10" rx="5" fill="#262870" opacity="0.8"/><rect x="40" y="219" width="44" height="11" rx="5.5" fill="#5a6ab8" opacity="0.45"/><rect x="40" y="217" width="44" height="10" rx="5" fill="#262870" opacity="0.8"/><rect x="94" y="219" width="44" height="11" rx="5.5" fill="#5a6ab8" opacity="0.45"/><rect x="94" y="217" width="44" height="10" rx="5" fill="#262870" opacity="0.8"/><rect x="148" y="219" width="44" height="11" rx="5.5" fill="#5a6ab8" opacity="0.45"/><rect x="148" y="217" width="44" height="10" rx="5" fill="#262870" opacity="0.8"/><rect x="202" y="219" width="44" height="11" rx="5.5" fill="#5a6ab8" opacity="0.45"/><rect x="202" y="217" width="44" height="10" rx="5" fill="#262870" opacity="0.8"/><rect x="256" y="219" width="44" height="11" rx="5.5" fill="#5a6ab8" opacity="0.45"/><rect x="256" y="217" width="44" height="10" rx="5" fill="#262870" opacity="0.8"/><rect x="310" y="219" width="44" height="11" rx="5.5" fill="#5a6ab8" opacity="0.45"/><rect x="310" y="217" width="44" height="10" rx="5" fill="#262870" opacity="0.8"/><rect x="364" y="219" width="44" height="11" rx="5.5" fill="#5a6ab8" opacity="0.45"/><rect x="364" y="217" width="44" height="10" rx="5" fill="#262870" opacity="0.8"/><rect x="418" y="219" width="44" height="11" rx="5.5" fill="#5a6ab8" opacity="0.45"/><rect x="418" y="217" width="44" height="10" rx="5" fill="#262870" opacity="0.8"/><rect x="472" y="219" width="44" height="11" rx="5.5" fill="#5a6ab8" opacity="0.45"/><rect x="472" y="217" width="44" height="10" rx="5" fill="#262870" opacity="0.8"/><rect x="526" y="219" width="44" height="11" rx="5.5" fill="#5a6ab8" opacity="0.45"/><rect x="526" y="217" width="44" height="10" rx="5" fill="#262870" opacity="0.8"/><rect x="-40" y="236" width="44" height="11" rx="5.5" fill="#5a6ab8" opacity="0.45"/><rect x="-40" y="234" width="44" height="10" rx="5" fill="#262870" opacity="0.8"/><rect x="14" y="236" width="44" height="11" rx="5.5" fill="#5a6ab8" opacity="0.45"/><rect x="14" y="234" width="44" height="10" rx="5" fill="#262870" opacity="0.8"/><rect x="68" y="236" width="44" height="11" rx="5.5" fill="#5a6ab8" opacity="0.45"/><rect x="68" y="234" width="44" height="10" rx="5" fill="#262870" opacity="0.8"/><rect x="122" y="236" width="44" height="11" rx="5.5" fill="#5a6ab8" opacity="0.45"/><rect x="122" y="234" width="44" height="10" rx="5" fill="#262870" opacity="0.8"/><rect x="176" y="236" width="44" height="11" rx="5.5" fill="#5a6ab8" opacity="0.45"/><rect x="176" y="234" width="44" height="10" rx="5" fill="#262870" opacity="0.8"/><rect x="230" y="236" width="44" height="11" rx="5.5" fill="#5a6ab8" opacity="0.45"/><rect x="230" y="234" width="44" height="10" rx="5" fill="#262870" opacity="0.8"/><rect x="284" y="236" width="44" height="11" rx="5.5" fill="#5a6ab8" opacity="0.45"/><rect x="284" y="234" width="44" height="10" rx="5" fill="#262870" opacity="0.8"/><rect x="338" y="236" width="44" height="11" rx="5.5" fill="#5a6ab8" opacity="0.45"/><rect x="338" y="234" width="44" height="10" rx="5" fill="#262870" opacity="0.8"/><rect x="392" y="236" width="44" height="11" rx="5.5" fill="#5a6ab8" opacity="0.45"/><rect x="392" y="234" width="44" height="10" rx="5" fill="#262870" opacity="0.8"/><rect x="446" y="236" width="44" height="11" rx="5.5" fill="#5a6ab8" opacity="0.45"/><rect x="446" y="234" width="44" height="10" rx="5" fill="#262870" opacity="0.8"/><rect x="500" y="236" width="44" height="11" rx="5.5" fill="#5a6ab8" opacity="0.45"/><rect x="500" y="234" width="44" height="10" rx="5" fill="#262870" opacity="0.8"/><rect x="-14" y="253" width="44" height="11" rx="5.5" fill="#5a6ab8" opacity="0.45"/><rect x="-14" y="251" width="44" height="10" rx="5" fill="#262870" opacity="0.8"/><rect x="40" y="253" width="44" height="11" rx="5.5" fill="#5a6ab8" opacity="0.45"/><rect x="40" y="251" width="44" height="10" rx="5" fill="#262870" opacity="0.8"/><rect x="94" y="253" width="44" height="11" rx="5.5" fill="#5a6ab8" opacity="0.45"/><rect x="94" y="251" width="44" height="10" rx="5" fill="#262870" opacity="0.8"/><rect x="148" y="253" width="44" height="11" rx="5.5" fill="#5a6ab8" opacity="0.45"/><rect x="148" y="251" width="44" height="10" rx="5" fill="#262870" opacity="0.8"/><rect x="202" y="253" width="44" height="11" rx="5.5" fill="#5a6ab8" opacity="0.45"/><rect x="202" y="251" width="44" height="10" rx="5" fill="#262870" opacity="0.8"/><rect x="256" y="253" width="44" height="11" rx="5.5" fill="#5a6ab8" opacity="0.45"/><rect x="256" y="251" width="44" height="10" rx="5" fill="#262870" opacity="0.8"/><rect x="310" y="253" width="44" height="11" rx="5.5" fill="#5a6ab8" opacity="0.45"/><rect x="310" y="251" width="44" height="10" rx="5" fill="#262870" opacity="0.8"/><rect x="364" y="253" width="44" height="11" rx="5.5" fill="#5a6ab8" opacity="0.45"/><rect x="364" y="251" width="44" height="10" rx="5" fill="#262870" opacity="0.8"/><rect x="418" y="253" width="44" height="11" rx="5.5" fill="#5a6ab8" opacity="0.45"/><rect x="418" y="251" width="44" height="10" rx="5" fill="#262870" opacity="0.8"/><rect x="472" y="253" width="44" height="11" rx="5.5" fill="#5a6ab8" opacity="0.45"/><rect x="472" y="251" width="44" height="10" rx="5" fill="#262870" opacity="0.8"/><rect x="526" y="253" width="44" height="11" rx="5.5" fill="#5a6ab8" opacity="0.45"/><rect x="526" y="251" width="44" height="10" rx="5" fill="#262870" opacity="0.8"/><rect x="-40" y="270" width="44" height="11" rx="5.5" fill="#5a6ab8" opacity="0.45"/><rect x="-40" y="268" width="44" height="10" rx="5" fill="#262870" opacity="0.8"/><rect x="14" y="270" width="44" height="11" rx="5.5" fill="#5a6ab8" opacity="0.45"/><rect x="14" y="268" width="44" height="10" rx="5" fill="#262870" opacity="0.8"/><rect x="68" y="270" width="44" height="11" rx="5.5" fill="#5a6ab8" opacity="0.45"/><rect x="68" y="268" width="44" height="10" rx="5" fill="#262870" opacity="0.8"/><rect x="122" y="270" width="44" height="11" rx="5.5" fill="#5a6ab8" opacity="0.45"/><rect x="122" y="268" width="44" height="10" rx="5" fill="#262870" opacity="0.8"/><rect x="176" y="270" width="44" height="11" rx="5.5" fill="#5a6ab8" opacity="0.45"/><rect x="176" y="268" width="44" height="10" rx="5" fill="#262870" opacity="0.8"/><rect x="230" y="270" width="44" height="11" rx="5.5" fill="#5a6ab8" opacity="0.45"/><rect x="230" y="268" width="44" height="10" rx="5" fill="#262870" opacity="0.8"/><rect x="284" y="270" width="44" height="11" rx="5.5" fill="#5a6ab8" opacity="0.45"/><rect x="284" y="268" width="44" height="10" rx="5" fill="#262870" opacity="0.8"/><rect x="338" y="270" width="44" height="11" rx="5.5" fill="#5a6ab8" opacity="0.45"/><rect x="338" y="268" width="44" height="10" rx="5" fill="#262870" opacity="0.8"/><rect x="392" y="270" width="44" height="11" rx="5.5" fill="#5a6ab8" opacity="0.45"/><rect x="392" y="268" width="44" height="10" rx="5" fill="#262870" opacity="0.8"/><rect x="446" y="270" width="44" height="11" rx="5.5" fill="#5a6ab8" opacity="0.45"/><rect x="446" y="268" width="44" height="10" rx="5" fill="#262870" opacity="0.8"/><rect x="500" y="270" width="44" height="11" rx="5.5" fill="#5a6ab8" opacity="0.45"/><rect x="500" y="268" width="44" height="10" rx="5" fill="#262870" opacity="0.8"/><rect x="-14" y="287" width="44" height="11" rx="5.5" fill="#5a6ab8" opacity="0.45"/><rect x="-14" y="285" width="44" height="10" rx="5" fill="#262870" opacity="0.8"/><rect x="40" y="287" width="44" height="11" rx="5.5" fill="#5a6ab8" opacity="0.45"/><rect x="40" y="285" width="44" height="10" rx="5" fill="#262870" opacity="0.8"/><rect x="94" y="287" width="44" height="11" rx="5.5" fill="#5a6ab8" opacity="0.45"/><rect x="94" y="285" width="44" height="10" rx="5" fill="#262870" opacity="0.8"/><rect x="148" y="287" width="44" height="11" rx="5.5" fill="#5a6ab8" opacity="0.45"/><rect x="148" y="285" width="44" height="10" rx="5" fill="#262870" opacity="0.8"/><rect x="202" y="287" width="44" height="11" rx="5.5" fill="#5a6ab8" opacity="0.45"/><rect x="202" y="285" width="44" height="10" rx="5" fill="#262870" opacity="0.8"/><rect x="256" y="287" width="44" height="11" rx="5.5" fill="#5a6ab8" opacity="0.45"/><rect x="256" y="285" width="44" height="10" rx="5" fill="#262870" opacity="0.8"/><rect x="310" y="287" width="44" height="11" rx="5.5" fill="#5a6ab8" opacity="0.45"/><rect x="310" y="285" width="44" height="10" rx="5" fill="#262870" opacity="0.8"/><rect x="364" y="287" width="44" height="11" rx="5.5" fill="#5a6ab8" opacity="0.45"/><rect x="364" y="285" width="44" height="10" rx="5" fill="#262870" opacity="0.8"/><rect x="418" y="287" width="44" height="11" rx="5.5" fill="#5a6ab8" opacity="0.45"/><rect x="418" y="285" width="44" height="10" rx="5" fill="#262870" opacity="0.8"/><rect x="472" y="287" width="44" height="11" rx="5.5" fill="#5a6ab8" opacity="0.45"/><rect x="472" y="285" width="44" height="10" rx="5" fill="#262870" opacity="0.8"/><rect x="526" y="287" width="44" height="11" rx="5.5" fill="#5a6ab8" opacity="0.45"/><rect x="526" y="285" width="44" height="10" rx="5" fill="#262870" opacity="0.8"/><rect x="-40" y="304" width="44" height="11" rx="5.5" fill="#5a6ab8" opacity="0.45"/><rect x="-40" y="302" width="44" height="10" rx="5" fill="#262870" opacity="0.8"/><rect x="14" y="304" width="44" height="11" rx="5.5" fill="#5a6ab8" opacity="0.45"/><rect x="14" y="302" width="44" height="10" rx="5" fill="#262870" opacity="0.8"/><rect x="68" y="304" width="44" height="11" rx="5.5" fill="#5a6ab8" opacity="0.45"/><rect x="68" y="302" width="44" height="10" rx="5" fill="#262870" opacity="0.8"/><rect x="122" y="304" width="44" height="11" rx="5.5" fill="#5a6ab8" opacity="0.45"/><rect x="122" y="302" width="44" height="10" rx="5" fill="#262870" opacity="0.8"/><rect x="176" y="304" width="44" height="11" rx="5.5" fill="#5a6ab8" opacity="0.45"/><rect x="176" y="302" width="44" height="10" rx="5" fill="#262870" opacity="0.8"/><rect x="230" y="304" width="44" height="11" rx="5.5" fill="#5a6ab8" opacity="0.45"/><rect x="230" y="302" width="44" height="10" rx="5" fill="#262870" opacity="0.8"/><rect x="284" y="304" width="44" height="11" rx="5.5" fill="#5a6ab8" opacity="0.45"/><rect x="284" y="302" width="44" height="10" rx="5" fill="#262870" opacity="0.8"/><rect x="338" y="304" width="44" height="11" rx="5.5" fill="#5a6ab8" opacity="0.45"/><rect x="338" y="302" width="44" height="10" rx="5" fill="#262870" opacity="0.8"/><rect x="392" y="304" width="44" height="11" rx="5.5" fill="#5a6ab8" opacity="0.45"/><rect x="392" y="302" width="44" height="10" rx="5" fill="#262870" opacity="0.8"/><rect x="446" y="304" width="44" height="11" rx="5.5" fill="#5a6ab8" opacity="0.45"/><rect x="446" y="302" width="44" height="10" rx="5" fill="#262870" opacity="0.8"/><rect x="500" y="304" width="44" height="11" rx="5.5" fill="#5a6ab8" opacity="0.45"/><rect x="500" y="302" width="44" height="10" rx="5" fill="#262870" opacity="0.8"/><defs><radialGradient id="lt" cx="0.78" cy="0.4" r="0.5"><stop offset="0" stop-color="#6a6ad0" stop-opacity="0.35"/><stop offset="1" stop-color="#6a6ad0" stop-opacity="0"/></radialGradient><radialGradient id="gl" cx="0.3" cy="0.68" r="0.33"><stop offset="0" stop-color="#3545e8" stop-opacity="0.35"/><stop offset="1" stop-color="#3545e8" stop-opacity="0"/></radialGradient><linearGradient id="dk" x1="0" y1="0" x2="0" y2="1"><stop offset="0.5" stop-color="#000" stop-opacity="0"/><stop offset="1" stop-color="#000" stop-opacity="0.3"/></linearGradient></defs><rect width="500" height="283" fill="url(#lt)"/><rect width="500" height="283" fill="url(#gl)"/><rect width="500" height="283" fill="url(#dk)"/><path d="M29 20L273 23V157L34 161z" fill="#07070e"/><rect x="147" y="159" width="16" height="70" fill="#0a0a12"/><path d="M325 123C312 128 300 134 293 140C286 148 282 160 279 180C276 200 274 215 273 240L268 283H434C436 262 441 248 440.5 237C438 210 432 190 426 175C418 155 410 142 402 135C390 125 378 118 365 114z" fill="#111117"/><path d="M327 122L334 159L361 152L360 118z" fill="#26262c"/><path d="M350 160L350 250" stroke="#2a2a30" stroke-width="1"/><path d="M366 80c4-2 6 2 5 8s-3 8-6 7z" fill="#6a585c"/><path d="M315 70C313 95 318 112 326 121C332 127 338 127 344 127C352 127 360 120 363 110C366 98 367 85 366 70C364 56 354 50 340 50C326 50 317 56 315 70z" fill="#75636a"/><path d="M320 104C326 120 334 127 343 127C352 127 359 119 362 106C356 112 350 114 342 114C334 114 326 111 320 104z" fill="#8a8088" opacity="0.75"/><path d="M313 84C309 60 320 44 340 43C358 43 369 56 366 80C364 70 360 66 354 64C342 60 328 62 320 67C316 72 314 78 313 84z" fill="#45414a"/><path d="M300 252C306 238 324 234 342 236C356 238 364 246 362 258C358 268 346 272 330 271C314 270 302 264 300 252z" fill="#54454c"/><path d="M300 283L306 271C330 276 360 274 392 272L396 283z" fill="#6c6c78"/><path d="M0 262L160 228L290 236L330 281H0z" fill="#3a3a4e"/><path d="M0 262L160 228L175 230L40 281H0z" fill="#333346"/><path d="M202 223L287 236L310 281H232z" fill="#4c4c5c"/><path d="M215 250c10 0 15 5 25 5" stroke="#222" stroke-width="2" fill="none"/><rect width="500" height="283" fill="url(#vig)"/><rect x="45" y="36" width="3" height="3" fill="#c03020"/><rect x="48.5" y="36" width="3" height="3" fill="#40a040"/><rect x="45" y="39.5" width="3" height="3" fill="#2060c0"/><rect x="48.5" y="39.5" width="3" height="3" fill="#e0b020"/><text x="53" y="42" font-size="6" fill="#9aa0b0" font-family="Liberation Sans">Microsoft</text><text x="46" y="91" font-size="8.5" fill="#a8b0c0" font-family="Liberation Sans">What's New in C# 8.0</text><text x="46" y="106" font-size="4.5" fill="#6a7090" font-family="Liberation Sans">Mads Torgersen</text><rect x="240" y="123" width="4" height="38" fill="#fff"/><rect x="256" y="123" width="4" height="38" fill="#fff"/><path d="M186 141a9.5 8 0 0 1 19 0" fill="none" stroke="#eee" stroke-width="1.5"/><path d="M184.5 135.5L186 141.5l5.5-1.5" fill="none" stroke="#eee" stroke-width="1.5"/><text x="189" y="150.7" font-size="12.5" fill="#ddd" font-family="Liberation Sans" textLength="12.5">10</text><path d="M295 141a9.5 8 0 0 1 19 0" fill="none" stroke="#eee" stroke-width="1.5"/><path d="M315.5 135.5L314 141.5l-5.5-1.5" fill="none" stroke="#eee" stroke-width="1.5"/><text x="298.3" y="150.7" font-size="12.5" fill="#ddd" font-family="Liberation Sans" textLength="13">30</text><path d="M472 12l10.5 10.5M482.5 12L472 22.5" stroke="#fff" stroke-width="1.4"/><path d="M479 52.5H465.5v11h20v-6" fill="none" stroke="#fff" stroke-width="2"/><path d="M478 55.5l9-9M482 46.5h5.5v5.5" fill="none" stroke="#fff" stroke-width="1.6"/></svg>
<div class="a" style="left:1338px;top:720px;width:502px;height:285px;border:1px solid #e8751a"></div>
<div class="a" style="left:0px;top:1030px;width:1920px;height:27px;background:#e6e6e6"></div>
<div class="a" style="left:0px;top:1057px;width:1920px;height:1px;background:#c6c6c6"></div>
<div class="a" style="left:0px;top:1058px;width:1920px;height:22px;background:#f3f3f3"></div>
<svg class="a" style="left:26px;top:1038px;" width="5" height="9" viewBox="0 0 5 9"><path fill="#b0b0b0" d="M5 0v9L0 4.5z"/></svg>
<svg class="a" style="left:56px;top:1038px;" width="5" height="9" viewBox="0 0 5 9"><path fill="#1e5e3a" d="M0 0v9l5-4.5z"/></svg>
<div class="a" style="left:100px;top:1033px;width:1px;height:18px;background:#b8b8b8"></div>
<div class="a" style="left:0px;top:1029px;width:1920px;height:1px;background:#c6c6c6"></div>
<div class="a" style="left:153px;top:1029px;width:65px;height:25px;background:#fff;border-left:1px solid #c6c6c6;border-right:1px solid #c6c6c6"></div>
<div class="a" style="left:153px;top:1052px;width:65px;height:2px;background:#217346"></div>
<div class="t" style="transform:scaleX(0.9767);left:112.33px;top:1035.63px;font-size:13.5px;color:#333;">Start</div>
<div class="t" style="transform:scaleX(0.9898);left:164.82px;top:1035.63px;font-size:13.5px;color:#217346;font-weight:bold;">1. Add</div>
<div class="t" style="transform:scaleX(0.9561);left:229.82px;top:1035.63px;font-size:13.5px;color:#333;">2. Fill</div>
<div class="t" style="transform:scaleX(0.9581);left:288.62px;top:1035.63px;font-size:13.5px;color:#333;">3. Split</div>
<div class="t" style="transform:scaleX(0.9719);left:354.32px;top:1035.63px;font-size:13.5px;color:#333;">4. Transpose</div>
<div class="t" style="transform:scaleX(1.0192);left:458.32px;top:1035.63px;font-size:13.5px;color:#333;">5. Sort &amp; filter</div>
<div class="t" style="transform:scaleX(0.9824);left:569.33px;top:1035.63px;font-size:13.5px;color:#333;">6. Tables</div>
<div class="t" style="transform:scaleX(1.0006);left:649.33px;top:1035.63px;font-size:13.5px;color:#333;">7. Drop-downs</div>
<div class="t" style="transform:scaleX(0.9447);left:764.33px;top:1035.63px;font-size:13.5px;color:#333;">8. Analyze</div>
<div class="t" style="transform:scaleX(0.9465);left:850.33px;top:1035.63px;font-size:13.5px;color:#333;">9. Charts</div>
<div class="t" style="transform:scaleX(0.9595);left:930.33px;top:1035.63px;font-size:13.5px;color:#333;">10. PivotTables</div>
<div class="t" style="transform:scaleX(0.9368);left:1046.83px;top:1035.63px;font-size:13.5px;color:#333;">Learn</div>
<div class="a" style="left:275.5px;top:1033px;width:1px;height:18px;background:#b8b8b8"></div>
<div class="a" style="left:342.5px;top:1033px;width:1px;height:18px;background:#b8b8b8"></div>
<div class="a" style="left:444.5px;top:1033px;width:1px;height:18px;background:#b8b8b8"></div>
<div class="a" style="left:557.5px;top:1033px;width:1px;height:18px;background:#b8b8b8"></div>
<div class="a" style="left:636.5px;top:1033px;width:1px;height:18px;background:#b8b8b8"></div>
<div class="a" style="left:751.5px;top:1033px;width:1px;height:18px;background:#b8b8b8"></div>
<div class="a" style="left:838.5px;top:1033px;width:1px;height:18px;background:#b8b8b8"></div>
<div class="a" style="left:916.5px;top:1033px;width:1px;height:18px;background:#b8b8b8"></div>
<div class="a" style="left:1034px;top:1033px;width:1px;height:18px;background:#b8b8b8"></div>
<div class="a" style="left:1092.0px;top:1046px;width:2px;height:2px;background:#217346"></div>
<div class="a" style="left:1096.2px;top:1046px;width:2px;height:2px;background:#217346"></div>
<div class="a" style="left:1100.4px;top:1046px;width:2px;height:2px;background:#217346"></div>
<svg class="a" style="left:1115px;top:1033px;" width="18" height="18" viewBox="0 0 18 18"><circle cx="9" cy="9" r="7.5" fill="none" stroke="#666" stroke-width="1.3"/><path stroke="#666" stroke-width="1.5" d="M9 5v8M5 9h8"/></svg>
<div class="a" style="left:1152px;top:1036px;width:2px;height:2px;background:#a0a0a0"></div>
<div class="a" style="left:1152px;top:1041px;width:2px;height:2px;background:#a0a0a0"></div>
<div class="a" style="left:1152px;top:1046px;width:2px;height:2px;background:#a0a0a0"></div>
<div class="a" style="left:1169px;top:1036px;width:732px;height:15px;background:#dadada"></div>
<div class="a" style="left:1169px;top:1036px;width:15px;height:15px;background:#fff;border:1px solid #b4b4b4"></div>
<svg class="a" style="left:1173px;top:1039px;" width="5" height="9" viewBox="0 0 5 9"><path fill="#666" d="M5 0v9L0 4.5z"/></svg>
<div class="a" style="left:1183px;top:1036px;width:667px;height:15px;background:#fff;border:1px solid #a6a6a6"></div>
<div class="a" style="left:1886px;top:1036px;width:15px;height:15px;background:#fff;border:1px solid #b4b4b4"></div>
<svg class="a" style="left:1891px;top:1039px;" width="5" height="9" viewBox="0 0 5 9"><path fill="#666" d="M0 0v9l5-4.5z"/></svg>
<div class="a" style="left:1634px;top:1058px;width:38px;height:22px;background:#c8c8c8"></div>
<svg class="a" style="left:1646px;top:1061px;" width="14" height="14" viewBox="0 0 14 14"><path fill="none" stroke="#555" stroke-width="1.2" d="M.6 .6h12.5v12.5H.6zM.6 4.8h12.5M.6 9h12.5M4.8 .6v12.5M9 .6v12.5"/></svg>
<svg class="a" style="left:1684px;top:1061px;" width="14" height="15" viewBox="0 0 14 15"><path fill="none" stroke="#555" stroke-width="1" d="M.5 .5h13v14H.5zM3 3.5h8M3 6.5h8M3 9.5h8M3 12h8"/></svg>
<svg class="a" style="left:1722px;top:1061px;" width="15" height="14" viewBox="0 0 15 14"><path fill="none" stroke="#555" stroke-width="1" d="M.5 .5h13v13H.5zM.5 6.5h8V.5M4.5 .5v6"/></svg>
<div class="a" style="left:1753px;top:1067px;width:7px;height:2px;background:#555"></div>
<div class="a" style="left:1766px;top:1067px;width:100px;height:1px;background:#b4b4b4"></div>
<div class="a" style="left:1811px;top:1062px;width:5px;height:13px;background:#555"></div>
<svg class="a" style="left:1866px;top:1063px;" width="9" height="9" viewBox="0 0 9 9"><path stroke="#555" stroke-width="2" d="M4.5 0v9M0 4.5h9"/></svg>
<div class="t" style="transform:scaleX(0.8859);left:1885.40px;top:1061.96px;font-size:12px;color:#333;">100%</div>
</body></html>
